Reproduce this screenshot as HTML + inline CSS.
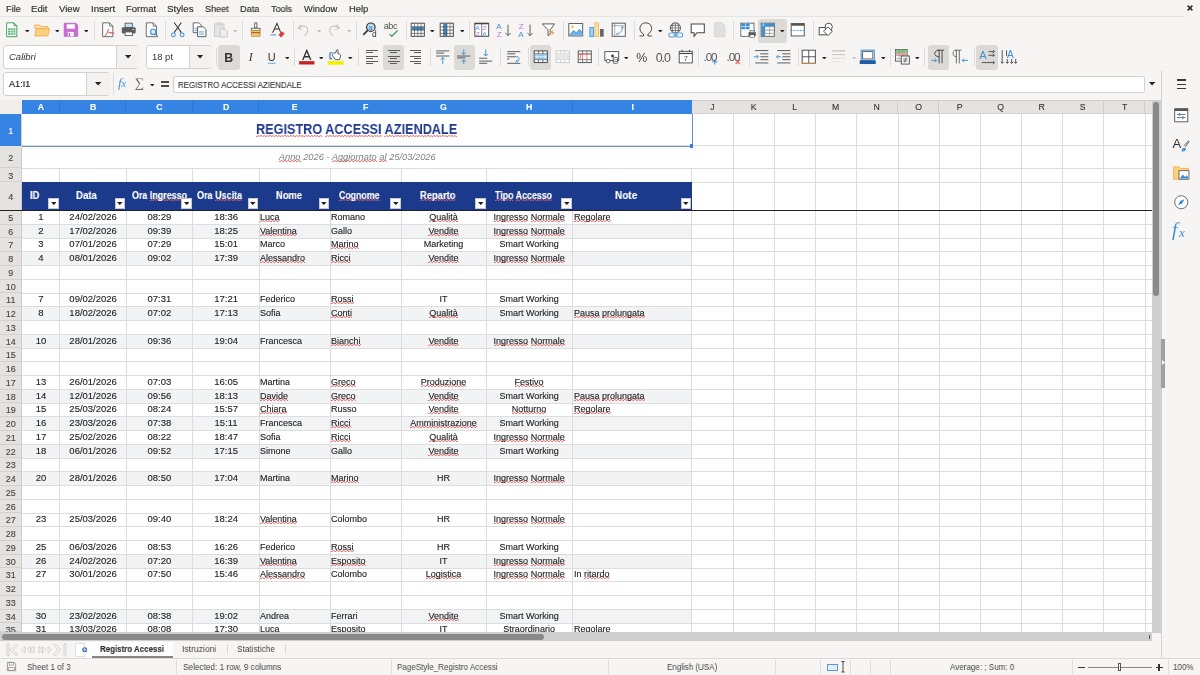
<!DOCTYPE html><html><head><meta charset="utf-8"><style>
html,body{margin:0;padding:0;}
body{width:1200px;height:675px;overflow:hidden;position:relative;background:#f6f5f4;font-family:"Liberation Sans",sans-serif;}
div{box-sizing:border-box;}
.wv{background-image:linear-gradient(135deg,transparent 38%,#e66262 38%,#e66262 62%,transparent 62%),linear-gradient(45deg,transparent 38%,#e66262 38%,#e66262 62%,transparent 62%);background-size:3.4px 2px;background-repeat:repeat-x;background-position:0 100%,1.7px 100%;}
.g{will-change:transform;}
.c{will-change:transform;position:absolute;height:13.75px;color:#222;white-space:nowrap;-webkit-text-stroke:0.12px #222;}
.n{font-size:9.5px;line-height:11.9px;}
.t{font-size:9px;line-height:13.2px;}
#root{position:absolute;left:0;top:0;width:1200px;height:675px;overflow:hidden;transform:translateZ(0);}
</style></head><body><div id="root">
<div class="g" style="position:absolute;left:5.50px;top:4.93px;font-size:9.30px;line-height:1;font-weight:normal;font-style:normal;color:#2e2e2e;white-space:nowrap;transform:scaleX(0.9882);transform-origin:0 0;-webkit-text-stroke:0.15px #2e2e2e;">File</div>
<div class="g" style="position:absolute;left:31.30px;top:4.93px;font-size:9.30px;line-height:1;font-weight:normal;font-style:normal;color:#2e2e2e;white-space:nowrap;transform:scaleX(1.0283);transform-origin:0 0;-webkit-text-stroke:0.15px #2e2e2e;">Edit</div>
<div class="g" style="position:absolute;left:58.60px;top:4.93px;font-size:9.30px;line-height:1;font-weight:normal;font-style:normal;color:#2e2e2e;white-space:nowrap;transform:scaleX(1.0300);transform-origin:0 0;-webkit-text-stroke:0.15px #2e2e2e;">View</div>
<div class="g" style="position:absolute;left:90.60px;top:4.93px;font-size:9.30px;line-height:1;font-weight:normal;font-style:normal;color:#2e2e2e;white-space:nowrap;transform:scaleX(1.0406);transform-origin:0 0;-webkit-text-stroke:0.15px #2e2e2e;">Insert</div>
<div class="g" style="position:absolute;left:125.90px;top:4.93px;font-size:9.30px;line-height:1;font-weight:normal;font-style:normal;color:#2e2e2e;white-space:nowrap;transform:scaleX(1.0224);transform-origin:0 0;-webkit-text-stroke:0.15px #2e2e2e;">Format</div>
<div class="g" style="position:absolute;left:166.70px;top:4.93px;font-size:9.30px;line-height:1;font-weight:normal;font-style:normal;color:#2e2e2e;white-space:nowrap;transform:scaleX(1.0494);transform-origin:0 0;-webkit-text-stroke:0.15px #2e2e2e;">Styles</div>
<div class="g" style="position:absolute;left:204.60px;top:4.93px;font-size:9.30px;line-height:1;font-weight:normal;font-style:normal;color:#2e2e2e;white-space:nowrap;transform:scaleX(0.9743);transform-origin:0 0;-webkit-text-stroke:0.15px #2e2e2e;">Sheet</div>
<div class="g" style="position:absolute;left:239.90px;top:4.93px;font-size:9.30px;line-height:1;font-weight:normal;font-style:normal;color:#2e2e2e;white-space:nowrap;transform:scaleX(0.9810);transform-origin:0 0;-webkit-text-stroke:0.15px #2e2e2e;">Data</div>
<div class="g" style="position:absolute;left:271.00px;top:4.93px;font-size:9.30px;line-height:1;font-weight:normal;font-style:normal;color:#2e2e2e;white-space:nowrap;transform:scaleX(0.9714);transform-origin:0 0;-webkit-text-stroke:0.15px #2e2e2e;">Tools</div>
<div class="g" style="position:absolute;left:303.70px;top:4.93px;font-size:9.30px;line-height:1;font-weight:normal;font-style:normal;color:#2e2e2e;white-space:nowrap;transform:scaleX(1.0025);transform-origin:0 0;-webkit-text-stroke:0.15px #2e2e2e;">Window</div>
<div class="g" style="position:absolute;left:348.80px;top:4.93px;font-size:9.30px;line-height:1;font-weight:normal;font-style:normal;color:#2e2e2e;white-space:nowrap;transform:scaleX(1.0096);transform-origin:0 0;-webkit-text-stroke:0.15px #2e2e2e;">Help</div>
<svg style="position:absolute;left:1186.5px;top:5px" width="6" height="6" viewBox="0 0 6 6"><path d="M0.6 0.6L5.4 5.4M5.4 0.6L0.6 5.4" stroke="#2a2a2a" stroke-width="1.5"/></svg>
<div style="position:absolute;left:0.00px;top:15.90px;width:1183.75px;height:0.80px;background:#e6e4e1;"></div>
<div style="position:absolute;left:758.20px;top:19.30px;width:28.50px;height:23.50px;background:#dcdad7;border-radius:3px;"></div>
<svg style="position:absolute;left:3.25px;top:21.25px" width="17.5" height="17.5" viewBox="0 0 24 24"><path d="M5 2.5h10l4 4v15H5z" fill="#fff" stroke="#3a9a5a" stroke-width="1.3"/><path d="M15 2.5v4h4" fill="none" stroke="#3a9a5a" stroke-width="1.3"/>
<rect x="7" y="10" width="10" height="9" fill="#5cb87a"/><path d="M7 13h10M7 16h10M10.5 10v9M13.8 10v9" stroke="#fff" stroke-width="0.8"/></svg>
<svg style="position:absolute;left:33.25px;top:21.25px" width="17.5" height="17.5" viewBox="0 0 24 24"><path d="M2.5 5.5h7l2 2h9v3H2.5z" fill="#fde4a6" stroke="#f0a853" stroke-width="1.2"/><path d="M2.5 20.5l2-10h18l-2 10z" fill="#fcd27c" stroke="#f0a853" stroke-width="1.2"/></svg>
<svg style="position:absolute;left:62.25px;top:21.25px" width="17.5" height="17.5" viewBox="0 0 24 24"><path d="M3 3h16l2.5 2.5V21H3z" fill="#c86fd6" stroke="#b35ac3" stroke-width="1"/><rect x="6.5" y="4.5" width="11" height="6" fill="#fff"/><rect x="8" y="15" width="8" height="6" fill="#fff"/><rect x="9.2" y="16.5" width="2" height="4.5" fill="#b35ac3"/></svg>
<svg style="position:absolute;left:98.75px;top:21.25px" width="17.5" height="17.5" viewBox="0 0 24 24"><path d="M5 2.5h9.5l4.5 4.5v14.5H5z" fill="#fff" stroke="#666" stroke-width="1.3"/><path d="M14.5 2.5V7H19" fill="none" stroke="#666" stroke-width="1.2"/><path d="M13 11c-1 5-3 8-5 10M13 15c2 1 5 2 8 1.5" fill="none" stroke="#e05555" stroke-width="1.4"/></svg>
<svg style="position:absolute;left:120.25px;top:21.25px" width="17.5" height="17.5" viewBox="0 0 24 24"><rect x="7" y="3" width="10" height="6" fill="#bfe3f7" stroke="#555" stroke-width="1.2"/><rect x="2.5" y="8.5" width="19" height="8.5" rx="1.5" fill="#5c5c5c"/><rect x="7" y="15" width="10" height="5" fill="#fff" stroke="#555" stroke-width="1.2"/><rect x="17" y="11" width="2" height="1.2" fill="#fff"/></svg>
<svg style="position:absolute;left:142.75px;top:21.25px" width="17.5" height="17.5" viewBox="0 0 24 24"><path d="M4.5 2.5h9.5l4.5 4.5v14.5h-14z" fill="#fff" stroke="#666" stroke-width="1.3"/><path d="M14 2.5V7h4.5" fill="none" stroke="#666" stroke-width="1.2"/><circle cx="14" cy="15" r="3.6" fill="#dff0fb" stroke="#3b8fd6" stroke-width="1.5"/><path d="M16.7 17.7l4 4" stroke="#3b8fd6" stroke-width="1.6"/></svg>
<svg style="position:absolute;left:169.25px;top:21.25px" width="17.5" height="17.5" viewBox="0 0 24 24"><path d="M7 2l10 14M17 2L7 16" stroke="#333" stroke-width="1.4" fill="none"/><circle cx="6" cy="19" r="2.6" fill="#fff" stroke="#3b8fd6" stroke-width="1.4"/><circle cx="18" cy="19" r="2.6" fill="#fff" stroke="#3b8fd6" stroke-width="1.4"/></svg>
<svg style="position:absolute;left:191.25px;top:21.25px" width="17.5" height="17.5" viewBox="0 0 24 24"><path d="M3 2.5h8l3 3V16H3z" fill="#fff" stroke="#555" stroke-width="1.2"/><path d="M9 8h8l3.5 3.5V21.5H9z" fill="#fff" stroke="#555" stroke-width="1.3"/><path d="M11 15h7M11 18h7M5 10h4M5 13h4" stroke="#3b8fd6" stroke-width="1.1"/></svg>
<svg style="position:absolute;left:212.25px;top:21.25px" width="17.5" height="17.5" viewBox="0 0 24 24"><rect x="3.5" y="4" width="13" height="17" fill="#e4e4e4" stroke="#c8c8c8" stroke-width="1.2"/><rect x="7" y="2.5" width="6" height="3" fill="#ddd" stroke="#c8c8c8"/><path d="M11 11h7l3 3v8H11z" fill="#eee" stroke="#c4c4c4" stroke-width="1.2"/></svg>
<svg style="position:absolute;left:247.25px;top:21.25px" width="17.5" height="17.5" viewBox="0 0 24 24"><path d="M10.5 2.5h3v7h-3z" fill="#fff" stroke="#555" stroke-width="1.2"/><path d="M6 10h12v3H6z" fill="#fff" stroke="#555" stroke-width="1.2"/><path d="M6 13h12v8H6z" fill="#f5c46e" stroke="#b8874a" stroke-width="1"/><path d="M6 16h12" stroke="#a0522d" stroke-width="1.4"/></svg>
<svg style="position:absolute;left:269.25px;top:21.25px" width="17.5" height="17.5" viewBox="0 0 24 24"><path d="M5 16L11 3l5 13M7.5 11h6.5" fill="none" stroke="#333" stroke-width="1.4"/><path d="M2 19h8" stroke="#3b8fd6" stroke-width="1.3"/><path d="M13 19l5-5 3.5 3.5-5 5z" fill="#e03a3a"/></svg>
<svg style="position:absolute;left:295.25px;top:21.25px" width="17.5" height="17.5" viewBox="0 0 24 24"><path d="M4 10l4.5-5M4 10l6 1.5M4.5 10c4-4.5 13-4 13 2.5 0 3-2 5.5-4.5 8" fill="none" stroke="#c4c4c4" stroke-width="1.4"/></svg>
<svg style="position:absolute;left:325.25px;top:21.25px" width="17.5" height="17.5" viewBox="0 0 24 24"><path d="M20 10l-4.5-5M20 10l-6 1.5M19.5 10c-4-4.5-13-4-13 2.5 0 3 2 5.5 4.5 8" fill="none" stroke="#c4c4c4" stroke-width="1.4"/></svg>
<svg style="position:absolute;left:361.25px;top:21.25px" width="17.5" height="17.5" viewBox="0 0 24 24"><circle cx="13.5" cy="8.5" r="5.8" fill="#bfdcf3" stroke="#333" stroke-width="1.6"/><path d="M9.5 12.5L3 19" stroke="#333" stroke-width="2.2"/><text x="10.3" y="11.8" font-size="10" fill="#2a7bc0" font-family="Liberation Sans">a</text><text x="15" y="22.5" font-size="11.5" fill="#333" font-family="Liberation Sans">d</text></svg>
<svg style="position:absolute;left:383.25px;top:21.25px" width="17.5" height="17.5" viewBox="0 0 24 24"><text x="1" y="11" font-size="12.5" fill="#555" font-family="Liberation Sans" letter-spacing="-0.6">abc</text><path d="M9 18l3 3 8-8" fill="none" stroke="#3aa060" stroke-width="1.7"/></svg>
<svg style="position:absolute;left:409.25px;top:21.25px" width="17.5" height="17.5" viewBox="0 0 24 24"><rect x="3" y="3" width="18" height="18" fill="#fff" stroke="#444" stroke-width="1.3"/><rect x="3.6" y="8" width="16.8" height="4.5" fill="#3b8fd6"/><path d="M3 8h18M3 12.5h18M3 17h18M7.5 3v18M12 3v18M16.5 3v18" stroke="#444" stroke-width="0.9"/></svg>
<svg style="position:absolute;left:438.25px;top:21.25px" width="17.5" height="17.5" viewBox="0 0 24 24"><rect x="3" y="3" width="18" height="18" fill="#fff" stroke="#444" stroke-width="1.3"/><rect x="8" y="3.6" width="4.5" height="16.8" fill="#3b8fd6"/><path d="M3 8h18M3 12.5h18M3 17h18M7.5 3v18M12 3v18M16.5 3v18" stroke="#444" stroke-width="0.9"/></svg>
<svg style="position:absolute;left:473.25px;top:21.25px" width="17.5" height="17.5" viewBox="0 0 24 24"><rect x="2.5" y="3" width="19" height="18" fill="#fff" stroke="#444" stroke-width="1.3"/><path d="M2.5 3.6h19" stroke="#444" stroke-width="1.8"/><path d="M12 3v18" stroke="#444" stroke-width="1"/><text x="3.5" y="12" font-size="8.5" fill="#3b8fd6" font-family="Liberation Sans">A</text><text x="4" y="20" font-size="8.5" fill="#c86fd6" font-family="Liberation Sans">Z</text><text x="13.5" y="12" font-size="8.5" fill="#c86fd6" font-family="Liberation Sans">Z</text><text x="13" y="20" font-size="8.5" fill="#3b8fd6" font-family="Liberation Sans">A</text></svg>
<svg style="position:absolute;left:496.25px;top:21.25px" width="17.5" height="17.5" viewBox="0 0 24 24"><text x="0.5" y="11" font-size="11" fill="#3b8fd6" font-family="Liberation Sans">A</text><text x="1" y="22" font-size="11" fill="#c86fd6" font-family="Liberation Sans">Z</text><path d="M16.5 5v15M13 16.5L16.5 20l3.5-3.5" fill="none" stroke="#555" stroke-width="1.3"/></svg>
<svg style="position:absolute;left:518.25px;top:21.25px" width="17.5" height="17.5" viewBox="0 0 24 24"><text x="1" y="11" font-size="11" fill="#c86fd6" font-family="Liberation Sans">Z</text><text x="0.5" y="22" font-size="11" fill="#3b8fd6" font-family="Liberation Sans">A</text><path d="M16.5 5v15M13 16.5L16.5 20l3.5-3.5" fill="none" stroke="#555" stroke-width="1.3"/></svg>
<svg style="position:absolute;left:539.75px;top:21.25px" width="17.5" height="17.5" viewBox="0 0 24 24"><path d="M3 4h17l-6 8v6l-3 2v-8z" fill="#fff" stroke="#555" stroke-width="1.3"/><path d="M18 11l-4 5h3l-2 5 5-6h-3z" fill="#f0a030"/></svg>
<svg style="position:absolute;left:567.25px;top:21.25px" width="17.5" height="17.5" viewBox="0 0 24 24"><rect x="2.5" y="3.5" width="19" height="17" fill="#fff" stroke="#555" stroke-width="1.3"/><circle cx="7.5" cy="8" r="1.8" fill="#f2c04a"/><path d="M3 20l6-7 4 3.5 4-5 4.5 5V20z" fill="#6cb4ea"/><path d="M3 20l6-7 4 3.5 4-5 4.5 5" fill="none" stroke="#2a7bc0" stroke-width="1"/></svg>
<svg style="position:absolute;left:588.25px;top:21.25px" width="17.5" height="17.5" viewBox="0 0 24 24"><rect x="2.5" y="9" width="5" height="12.5" fill="#9fd0f5" stroke="#3b8fd6" stroke-width="1.1"/><rect x="9.5" y="2.5" width="5" height="19" fill="#fde2a8" stroke="#f0b050" stroke-width="1.1"/><rect x="16.5" y="11" width="5" height="10.5" fill="#666"/></svg>
<svg style="position:absolute;left:610.25px;top:21.25px" width="17.5" height="17.5" viewBox="0 0 24 24"><rect x="3" y="3" width="18" height="18" fill="#fff" stroke="#555" stroke-width="1.3"/><path d="M3 6.5h18M6.5 3v18" stroke="#888" stroke-width="1"/><path d="M9 18c4 0 8-4 8-9" fill="none" stroke="#3b8fd6" stroke-width="1.3"/><path d="M15 10l2-2.5 2 2.5M11 16l-2 2 2 2" fill="none" stroke="#3b8fd6" stroke-width="1.2"/></svg>
<svg style="position:absolute;left:637.25px;top:21.25px" width="17.5" height="17.5" viewBox="0 0 24 24"><path d="M3.5 20.5h5.5v-2.5c-3-1.5-5-4.5-5-8 0-4.5 3.5-7.5 8-7.5s8 3 8 7.5c0 3.5-2 6.5-5 8v2.5h5.5" fill="none" stroke="#444" stroke-width="1.3"/></svg>
<svg style="position:absolute;left:667.25px;top:21.25px" width="17.5" height="17.5" viewBox="0 0 24 24"><circle cx="11.5" cy="9.5" r="7" fill="#fff" stroke="#444" stroke-width="1.2"/><path d="M4.5 9.5h14M11.5 2.5v14M5.5 6h12M5.5 13h12M8.5 3c-2 4-2 9 0 13M14.5 3c2 4 2 9 0 13" fill="none" stroke="#444" stroke-width="0.9"/><rect x="2.5" y="16.5" width="9.5" height="5.5" rx="2.7" fill="#fff" stroke="#5aa0dc" stroke-width="1.5"/><rect x="12" y="16.5" width="9.5" height="5.5" rx="2.7" fill="#fff" stroke="#5aa0dc" stroke-width="1.5"/><path d="M8 19.2h8" stroke="#5aa0dc" stroke-width="1.5"/></svg>
<svg style="position:absolute;left:689.25px;top:21.25px" width="17.5" height="17.5" viewBox="0 0 24 24"><path d="M3 4h18v12h-10l-4 5v-5H3z" fill="#fff" stroke="#444" stroke-width="1.4"/></svg>
<svg style="position:absolute;left:711.25px;top:21.25px" width="17.5" height="17.5" viewBox="0 0 24 24"><path d="M5 2.5h10l4 4v15H5z" fill="#e0e0e0" stroke="#d0d0d0" stroke-width="1.2"/></svg>
<svg style="position:absolute;left:738.75px;top:21.25px" width="17.5" height="17.5" viewBox="0 0 24 24"><rect x="2.5" y="3" width="18" height="18" fill="#fff" stroke="#555" stroke-width="1.2"/><rect x="3" y="3.5" width="12" height="8" fill="#3b8fd6"/><path d="M2.5 7.5h18M2.5 12h18M2.5 16.5h12M9 3v18M15 3v9" stroke="#fff" stroke-width="0.8"/><path d="M2.5 7.5h12M2.5 12h12" stroke="#bfe0f7" stroke-width="0.8"/><rect x="13" y="15" width="10" height="6" rx="1" fill="#555"/><rect x="15" y="13" width="6" height="3" fill="#bfe3f7" stroke="#555" stroke-width="0.8"/><rect x="15" y="19" width="6" height="3.5" fill="#fff" stroke="#555" stroke-width="0.8"/></svg>
<svg style="position:absolute;left:758.75px;top:21.25px" width="17.5" height="17.5" viewBox="0 0 24 24"><rect x="3" y="3" width="18" height="18" fill="#fff" stroke="#555" stroke-width="1.2"/><rect x="3.5" y="3.5" width="17" height="4.5" fill="#3b8fd6"/><rect x="3.5" y="3.5" width="5" height="17" fill="#3b8fd6"/><path d="M3 12.5h18M3 17h18M14.5 3v18" stroke="#888" stroke-width="0.9"/><path d="M9 8h12M9 12.5h12M9 17h12" stroke="#aaa" stroke-width="0.8"/><path d="M6 2v5M4 5l2 2 2-2" stroke="#bfe3f7" fill="none" stroke-width="1"/></svg>
<svg style="position:absolute;left:789.25px;top:21.25px" width="17.5" height="17.5" viewBox="0 0 24 24"><rect x="3" y="3.5" width="18" height="17" fill="#fff" stroke="#555" stroke-width="1.3"/><rect x="3" y="3.5" width="18" height="3" fill="#555"/><path d="M2 13h20" stroke="#3b8fd6" stroke-dasharray="2.5 1.8" stroke-width="1.3"/></svg>
<svg style="position:absolute;left:817.25px;top:21.25px" width="17.5" height="17.5" viewBox="0 0 24 24"><rect x="3" y="9" width="10" height="10" fill="#fff" stroke="#444" stroke-width="1.3"/><circle cx="16" cy="8" r="5" fill="#fff" stroke="#444" stroke-width="1.3"/><path d="M15 8l6 6-6 6-6-6z" fill="#fff" stroke="#444" stroke-width="1.3"/></svg>
<svg style="position:absolute;left:25.20px;top:29.63px" width="4.6" height="2.53" viewBox="0 0 10 5.5"><path d="M0 0h10L5 5.5z" fill="#222"/></svg>
<svg style="position:absolute;left:54.70px;top:29.63px" width="4.6" height="2.53" viewBox="0 0 10 5.5"><path d="M0 0h10L5 5.5z" fill="#222"/></svg>
<svg style="position:absolute;left:83.70px;top:29.63px" width="4.6" height="2.53" viewBox="0 0 10 5.5"><path d="M0 0h10L5 5.5z" fill="#222"/></svg>
<svg style="position:absolute;left:430.20px;top:29.63px" width="4.6" height="2.53" viewBox="0 0 10 5.5"><path d="M0 0h10L5 5.5z" fill="#222"/></svg>
<svg style="position:absolute;left:459.70px;top:29.63px" width="4.6" height="2.53" viewBox="0 0 10 5.5"><path d="M0 0h10L5 5.5z" fill="#222"/></svg>
<svg style="position:absolute;left:658.20px;top:29.63px" width="4.6" height="2.53" viewBox="0 0 10 5.5"><path d="M0 0h10L5 5.5z" fill="#222"/></svg>
<svg style="position:absolute;left:780.20px;top:29.63px" width="4.6" height="2.53" viewBox="0 0 10 5.5"><path d="M0 0h10L5 5.5z" fill="#222"/></svg>
<svg style="position:absolute;left:232.70px;top:29.63px" width="4.6" height="2.53" viewBox="0 0 10 5.5"><path d="M0 0h10L5 5.5z" fill="#bdbdbd"/></svg>
<svg style="position:absolute;left:317.20px;top:29.63px" width="4.6" height="2.53" viewBox="0 0 10 5.5"><path d="M0 0h10L5 5.5z" fill="#bdbdbd"/></svg>
<svg style="position:absolute;left:346.70px;top:29.63px" width="4.6" height="2.53" viewBox="0 0 10 5.5"><path d="M0 0h10L5 5.5z" fill="#bdbdbd"/></svg>
<div style="position:absolute;left:94.00px;top:21.00px;width:0.80px;height:19.00px;background:#dedcda;"></div>
<div style="position:absolute;left:164.50px;top:21.00px;width:0.80px;height:19.00px;background:#dedcda;"></div>
<div style="position:absolute;left:242.00px;top:21.00px;width:0.80px;height:19.00px;background:#dedcda;"></div>
<div style="position:absolute;left:292.50px;top:21.00px;width:0.80px;height:19.00px;background:#dedcda;"></div>
<div style="position:absolute;left:356.00px;top:21.00px;width:0.80px;height:19.00px;background:#dedcda;"></div>
<div style="position:absolute;left:405.50px;top:21.00px;width:0.80px;height:19.00px;background:#dedcda;"></div>
<div style="position:absolute;left:469.00px;top:21.00px;width:0.80px;height:19.00px;background:#dedcda;"></div>
<div style="position:absolute;left:562.50px;top:21.00px;width:0.80px;height:19.00px;background:#dedcda;"></div>
<div style="position:absolute;left:634.00px;top:21.00px;width:0.80px;height:19.00px;background:#dedcda;"></div>
<div style="position:absolute;left:733.00px;top:21.00px;width:0.80px;height:19.00px;background:#dedcda;"></div>
<div style="position:absolute;left:812.50px;top:21.00px;width:0.80px;height:19.00px;background:#dedcda;"></div>
<div style="position:absolute;left:3.30px;top:45.25px;width:136.20px;height:23.25px;background:#fff;border:0.8px solid #d5d1cc;border-radius:3px;"></div>
<div style="position:absolute;left:116.25px;top:45.65px;width:22.85px;height:22.45px;background:#f3f2f1;border-left:0.8px solid #d5d1cc;border-radius:0 3px 3px 0;"></div>
<svg style="position:absolute;left:125.10px;top:55.30px" width="6.2" height="3.41" viewBox="0 0 10 5.5"><path d="M0 0h10L5 5.5z" fill="#222"/></svg>
<div class="g" style="position:absolute;left:9.30px;top:53.22px;font-size:8.72px;line-height:1;font-weight:normal;font-style:italic;color:#333;white-space:nowrap;transform:scaleX(1.0884);transform-origin:0 0;">Calibri</div>
<div style="position:absolute;left:146.20px;top:45.25px;width:66.00px;height:23.25px;background:#fff;border:0.8px solid #d5d1cc;border-radius:3px;"></div>
<div style="position:absolute;left:189.00px;top:45.65px;width:22.80px;height:22.45px;background:#f3f2f1;border-left:0.8px solid #d5d1cc;border-radius:0 3px 3px 0;"></div>
<svg style="position:absolute;left:197.40px;top:55.30px" width="6.2" height="3.41" viewBox="0 0 10 5.5"><path d="M0 0h10L5 5.5z" fill="#222"/></svg>
<div class="g" style="position:absolute;left:152.20px;top:53.34px;font-size:8.58px;line-height:1;font-weight:normal;font-style:normal;color:#333;white-space:nowrap;transform:scaleX(1.1006);transform-origin:0 0;">18 pt</div>
<div style="position:absolute;left:218.20px;top:44.90px;width:21.60px;height:24.90px;background:#dcdad7;border-radius:3px;"></div>
<div style="position:absolute;left:382.50px;top:44.90px;width:21.50px;height:24.90px;background:#dcdad7;border-radius:3px;"></div>
<div style="position:absolute;left:454.00px;top:44.90px;width:21.00px;height:24.90px;background:#dcdad7;border-radius:3px;"></div>
<div style="position:absolute;left:530.00px;top:44.90px;width:21.00px;height:24.90px;background:#dcdad7;border-radius:3px;"></div>
<div style="position:absolute;left:927.50px;top:44.90px;width:21.50px;height:24.90px;background:#dcdad7;border-radius:3px;"></div>
<div style="position:absolute;left:976.00px;top:44.90px;width:21.50px;height:24.90px;background:#dcdad7;border-radius:3px;"></div>
<svg style="position:absolute;left:220.25px;top:48.25px" width="17.5" height="17.5" viewBox="0 0 24 24"><text x="12" y="19" text-anchor="middle" font-size="17" font-weight="bold" fill="#333" font-family="Liberation Sans">B</text></svg>
<svg style="position:absolute;left:242.25px;top:48.25px" width="17.5" height="17.5" viewBox="0 0 24 24"><text x="12" y="18.5" text-anchor="middle" font-size="16" font-style="italic" fill="#333" font-family="Liberation Serif">I</text></svg>
<svg style="position:absolute;left:263.25px;top:48.25px" width="17.5" height="17.5" viewBox="0 0 24 24"><text x="12" y="17.5" text-anchor="middle" font-size="15" fill="#333" font-family="Liberation Sans">U</text><path d="M6.5 21h11" stroke="#6aa8de" stroke-width="1.3"/></svg>
<svg style="position:absolute;left:298.25px;top:48.25px" width="17.5" height="17.5" viewBox="0 0 24 24"><path d="M6.5 16.5L12 3.5l5.5 13M8.5 12h7" fill="none" stroke="#333" stroke-width="1.9"/><rect x="1.5" y="18" width="21" height="4.6" fill="#c9211e"/></svg>
<svg style="position:absolute;left:327.25px;top:48.25px" width="17.5" height="17.5" viewBox="0 0 24 24"><rect x="1" y="18" width="22" height="5" fill="#f4f000"/><path d="M4 6.5h3.5M4 6.5v8h3" fill="none" stroke="#2a7bc0" stroke-width="1.6"/><path d="M8.5 7.5c1-1 2.5-1.5 3.5-.5l1-4c.3-1 2-1 2 .3v4.5l2 .5c1.5.5 2 2 1.5 3.5l-1.5 4.2h-5.5l-3.8-5c-.8-1-.3-2.5.8-3.5z" fill="#fff" stroke="#444" stroke-width="1.2"/></svg>
<svg style="position:absolute;left:433.75px;top:48.25px" width="17.5" height="17.5" viewBox="0 0 24 24"><path d="M3 4h18" stroke="#555" stroke-width="1.3"/><path d="M3 7h11" stroke="#555" stroke-width="1.3"/><path d="M3 11h18" stroke="#555" stroke-width="1.3"/><path d="M12 22v-9M9 16l3-3 3 3" fill="none" stroke="#3b8fd6" stroke-width="1.3"/></svg>
<svg style="position:absolute;left:455.25px;top:48.25px" width="17.5" height="17.5" viewBox="0 0 24 24"><path d="M3 11h18" stroke="#555" stroke-width="1.3"/><path d="M3 13.5h11" stroke="#555" stroke-width="1.3"/><path d="M12 2v7M9 6l3 3 3-3M12 22v-6M9 19l3-3 3 3" fill="none" stroke="#3b8fd6" stroke-width="1.3"/></svg>
<svg style="position:absolute;left:477.25px;top:48.25px" width="17.5" height="17.5" viewBox="0 0 24 24"><path d="M3 14h11" stroke="#555" stroke-width="1.3"/><path d="M3 18h18" stroke="#555" stroke-width="1.3"/><path d="M3 21h11" stroke="#555" stroke-width="1.3"/><path d="M12 2v9M9 8l3 3 3-3" fill="none" stroke="#3b8fd6" stroke-width="1.3"/></svg>
<svg style="position:absolute;left:505.25px;top:48.25px" width="17.5" height="17.5" viewBox="0 0 24 24"><path d="M3 5h18" stroke="#555" stroke-width="1.3"/><path d="M3 8h11" stroke="#555" stroke-width="1.3"/><path d="M3 12h12" stroke="#555" stroke-width="1.3"/><path d="M3 15h3" stroke="#555" stroke-width="1.3"/><path d="M3 21h18" stroke="#555" stroke-width="1.3"/><path d="M15 12h2c3 0 3 6 0 6h-2M17 16l-2 2 2 2" fill="none" stroke="#3b8fd6" stroke-width="1.3"/></svg>
<svg style="position:absolute;left:532.25px;top:48.25px" width="17.5" height="17.5" viewBox="0 0 24 24"><rect x="3" y="4" width="18" height="16" fill="#fff" stroke="#444" stroke-width="1.3"/><path d="M3 8h18M3 16h18M9 4v4M15 4v4M9 16v4M15 16v4" stroke="#444" stroke-width="1"/><rect x="3.6" y="8.6" width="16.8" height="6.8" fill="#8cc4ee"/><path d="M5 12h14M7 10l-2 2 2 2M17 10l2 2-2 2" fill="none" stroke="#fff" stroke-width="1.1"/></svg>
<svg style="position:absolute;left:554.25px;top:48.25px" width="17.5" height="17.5" viewBox="0 0 24 24"><rect x="3" y="4" width="18" height="16" fill="#fff" stroke="#c8c8c8" stroke-width="1.3"/><path d="M3 8h18M3 16h18M9 4v4M15 4v4M9 16v4M15 16v4" stroke="#c8c8c8" stroke-width="1"/><rect x="3.6" y="8.6" width="16.8" height="6.8" fill="#e6e6e6"/></svg>
<svg style="position:absolute;left:576.25px;top:48.25px" width="17.5" height="17.5" viewBox="0 0 24 24"><rect x="3" y="4" width="18" height="16" fill="#fff" stroke="#555" stroke-width="1.3"/><path d="M3 8h18M3 16h18M9 4v4M15 4v4M9 16v4M15 16v4" stroke="#555" stroke-width="1"/><path d="M3 8.5h18M9 8v8M15 8v8M6 8v8" stroke="#e05555" stroke-width="1"/></svg>
<svg style="position:absolute;left:602.75px;top:48.25px" width="17.5" height="17.5" viewBox="0 0 24 24"><rect x="2.5" y="5" width="19" height="12" fill="#fff" stroke="#444" stroke-width="1.2"/><circle cx="13" cy="11" r="2" fill="#444"/><circle cx="7" cy="18" r="2.5" fill="#fff" stroke="#444" stroke-width="1.1"/><rect x="14" y="13" width="6" height="8" rx="1" fill="#fff" stroke="#444" stroke-width="1.1"/><path d="M14 16h6M14 18.5h6" stroke="#444" stroke-width="0.8"/></svg>
<svg style="position:absolute;left:633.25px;top:48.25px" width="17.5" height="17.5" viewBox="0 0 24 24"><text x="12" y="19" text-anchor="middle" font-size="17" fill="#444" font-family="Liberation Sans">%</text></svg>
<svg style="position:absolute;left:654.25px;top:48.25px" width="17.5" height="17.5" viewBox="0 0 24 24"><text x="12" y="19.5" text-anchor="middle" font-size="17" fill="#555" font-family="Liberation Sans" letter-spacing="-1.5">0.0</text></svg>
<svg style="position:absolute;left:677.25px;top:48.25px" width="17.5" height="17.5" viewBox="0 0 24 24"><rect x="3" y="4.5" width="18" height="16" fill="#fff" stroke="#444" stroke-width="1.2"/><path d="M3 7.5h18" stroke="#444" stroke-width="1.6"/><path d="M7 2.5v3M17 2.5v3" stroke="#444" stroke-width="1.2"/><text x="12" y="18.5" text-anchor="middle" font-size="10" fill="#444" font-family="Liberation Sans">7</text></svg>
<svg style="position:absolute;left:702.25px;top:48.25px" width="17.5" height="17.5" viewBox="0 0 24 24"><text x="11" y="18.5" text-anchor="middle" font-size="16" fill="#555" font-family="Liberation Sans" letter-spacing="-1.5">.00</text><path d="M17.5 15.5v7M14 19h7" stroke="#3b8fd6" stroke-width="1.4"/></svg>
<svg style="position:absolute;left:725.25px;top:48.25px" width="17.5" height="17.5" viewBox="0 0 24 24"><text x="11" y="18.5" text-anchor="middle" font-size="16" fill="#555" font-family="Liberation Sans" letter-spacing="-1.5">.00</text><path d="M14.5 16l6 6M20.5 16l-6 6" stroke="#e05555" stroke-width="1.4"/></svg>
<svg style="position:absolute;left:753.25px;top:48.25px" width="17.5" height="17.5" viewBox="0 0 24 24"><path d="M3 3.5h18" stroke="#555" stroke-width="1.3"/><path d="M10 8h11" stroke="#555" stroke-width="1.3"/><path d="M10 12h11" stroke="#555" stroke-width="1.3"/><path d="M10 16h11" stroke="#555" stroke-width="1.3"/><path d="M3 20.5h18" stroke="#555" stroke-width="1.3"/><path d="M1 12h6M5 9.5l2.5 2.5L5 14.5" fill="none" stroke="#3b8fd6" stroke-width="1.3"/></svg>
<svg style="position:absolute;left:774.75px;top:48.25px" width="17.5" height="17.5" viewBox="0 0 24 24"><path d="M3 3.5h18" stroke="#555" stroke-width="1.3"/><path d="M10 8h11" stroke="#555" stroke-width="1.3"/><path d="M10 12h11" stroke="#555" stroke-width="1.3"/><path d="M10 16h11" stroke="#555" stroke-width="1.3"/><path d="M3 20.5h18" stroke="#555" stroke-width="1.3"/><path d="M2 12h6M4.5 9.5L2 12l2.5 2.5" fill="none" stroke="#3b8fd6" stroke-width="1.3"/></svg>
<svg style="position:absolute;left:800.25px;top:48.25px" width="17.5" height="17.5" viewBox="0 0 24 24"><rect x="3" y="3" width="18" height="18" fill="#fff" stroke="#444" stroke-width="1.3"/><path d="M3 12h18M12 3v18" stroke="#444" stroke-width="1.2"/><path d="M3 21h18" stroke="#f0a030" stroke-width="1"/></svg>
<svg style="position:absolute;left:830.25px;top:48.25px" width="17.5" height="17.5" viewBox="0 0 24 24"><path d="M3 4h18" stroke="#c8c8c8" stroke-width="2"/><path d="M3 9h18" stroke="#c8c8c8" stroke-width="1.6"/><path d="M3 14h18" stroke="#c8c8c8" stroke-width="1" stroke-dasharray="3 1"/><path d="M3 19h18" stroke="#c8c8c8" stroke-width="1" stroke-dasharray="1.5 1.5"/></svg>
<svg style="position:absolute;left:859.25px;top:48.25px" width="17.5" height="17.5" viewBox="0 0 24 24"><rect x="3" y="3" width="18" height="14" fill="#fff" stroke="#3b8fd6" stroke-width="1.4"/><rect x="5" y="5" width="14" height="10" fill="#fff" stroke="#444" stroke-width="1.1"/><rect x="1" y="17" width="22" height="5" fill="#1f5ca6"/></svg>
<svg style="position:absolute;left:893.75px;top:48.25px" width="17.5" height="17.5" viewBox="0 0 24 24"><rect x="2" y="2" width="16" height="16" fill="#fff" stroke="#555" stroke-width="1.2"/><rect x="2.5" y="2.5" width="15" height="4" fill="#7ecb7e"/><rect x="2.5" y="6.5" width="15" height="4" fill="#f4a6a6"/><path d="M2 6.5h16M2 10.5h16M2 14.5h16M7 2v16M12 2v16" stroke="#888" stroke-width="0.7"/><rect x="10" y="11" width="11" height="11" fill="#fff" stroke="#444" stroke-width="1.2"/><path d="M12.5 15h6M12.5 18h6M17 13l-3 7" stroke="#444" stroke-width="1"/></svg>
<svg style="position:absolute;left:930.25px;top:48.25px" width="17.5" height="17.5" viewBox="0 0 24 24"><path d="M10.5 3h9M12.5 3v18M16.5 3v18M12.5 3c-4 0-6 2-6 4.5s2 4.5 6 4.5" fill="none" stroke="#444" stroke-width="1.3"/><path d="M2 17h7M6.5 14.5L9 17l-2.5 2.5" fill="none" stroke="#3b8fd6" stroke-width="1.3"/></svg>
<svg style="position:absolute;left:952.25px;top:48.25px" width="17.5" height="17.5" viewBox="0 0 24 24"><path d="M4 3h9M6 3v18M10 3v18M6 3c-4 0-4.5 2-4.5 4.5S3 12 6 12" fill="none" stroke="#666" stroke-width="1.3"/><path d="M14 17h8M16.5 14.5L14 17l2.5 2.5" fill="none" stroke="#3b8fd6" stroke-width="1.3"/></svg>
<svg style="position:absolute;left:978.75px;top:48.25px" width="17.5" height="17.5" viewBox="0 0 24 24"><text x="0.5" y="15" font-size="15" fill="#3b8fd6" font-family="Liberation Sans">A</text><path d="M13 5h8M19 3l2 2-2 2M13 10h8M19 8l2 2-2 2M4 20h17M19 18l2 2-2 2" fill="none" stroke="#444" stroke-width="1.2"/></svg>
<svg style="position:absolute;left:999.75px;top:48.25px" width="17.5" height="17.5" viewBox="0 0 24 24"><text x="9.5" y="14" font-size="14" fill="#3b8fd6" font-family="Liberation Sans">A</text><path d="M3 3v18M1 19l2 2 2-2M10 15v6M8 19l2 2 2-2M16 15v6M14 19l2 2 2-2M21.5 15v6M19.5 19l2 2 2-2M9 3v8" fill="none" stroke="#444" stroke-width="1.2"/></svg>
<div style="position:absolute;left:365.50px;top:49.95px;width:12.00px;height:1.10px;background:#5c5c5c;"></div>
<div style="position:absolute;left:387.70px;top:49.95px;width:12.00px;height:1.10px;background:#5c5c5c;"></div>
<div style="position:absolute;left:409.60px;top:49.95px;width:11.90px;height:1.10px;background:#5c5c5c;"></div>
<div style="position:absolute;left:365.50px;top:55.55px;width:12.00px;height:1.10px;background:#5c5c5c;"></div>
<div style="position:absolute;left:387.70px;top:55.55px;width:12.00px;height:1.10px;background:#5c5c5c;"></div>
<div style="position:absolute;left:409.60px;top:55.55px;width:11.90px;height:1.10px;background:#5c5c5c;"></div>
<div style="position:absolute;left:365.50px;top:60.90px;width:12.00px;height:1.10px;background:#5c5c5c;"></div>
<div style="position:absolute;left:387.70px;top:60.90px;width:12.00px;height:1.10px;background:#5c5c5c;"></div>
<div style="position:absolute;left:409.60px;top:60.90px;width:11.90px;height:1.10px;background:#5c5c5c;"></div>
<div style="position:absolute;left:365.50px;top:51.95px;width:7.30px;height:1.10px;background:#5c5c5c;"></div>
<div style="position:absolute;left:390.30px;top:51.95px;width:6.60px;height:1.10px;background:#5c5c5c;"></div>
<div style="position:absolute;left:414.30px;top:51.95px;width:7.20px;height:1.10px;background:#5c5c5c;"></div>
<div style="position:absolute;left:365.50px;top:57.85px;width:7.30px;height:1.10px;background:#5c5c5c;"></div>
<div style="position:absolute;left:390.30px;top:57.85px;width:6.60px;height:1.10px;background:#5c5c5c;"></div>
<div style="position:absolute;left:414.30px;top:57.85px;width:7.20px;height:1.10px;background:#5c5c5c;"></div>
<div style="position:absolute;left:365.50px;top:63.00px;width:7.30px;height:1.10px;background:#5c5c5c;"></div>
<div style="position:absolute;left:390.30px;top:63.00px;width:6.60px;height:1.10px;background:#5c5c5c;"></div>
<div style="position:absolute;left:414.30px;top:63.00px;width:7.20px;height:1.10px;background:#5c5c5c;"></div>
<svg style="position:absolute;left:284.70px;top:56.73px" width="4.6" height="2.53" viewBox="0 0 10 5.5"><path d="M0 0h10L5 5.5z" fill="#222"/></svg>
<svg style="position:absolute;left:318.70px;top:56.73px" width="4.6" height="2.53" viewBox="0 0 10 5.5"><path d="M0 0h10L5 5.5z" fill="#222"/></svg>
<svg style="position:absolute;left:348.20px;top:56.73px" width="4.6" height="2.53" viewBox="0 0 10 5.5"><path d="M0 0h10L5 5.5z" fill="#222"/></svg>
<svg style="position:absolute;left:623.70px;top:56.73px" width="4.6" height="2.53" viewBox="0 0 10 5.5"><path d="M0 0h10L5 5.5z" fill="#222"/></svg>
<svg style="position:absolute;left:822.20px;top:56.73px" width="4.6" height="2.53" viewBox="0 0 10 5.5"><path d="M0 0h10L5 5.5z" fill="#222"/></svg>
<svg style="position:absolute;left:880.70px;top:56.73px" width="4.6" height="2.53" viewBox="0 0 10 5.5"><path d="M0 0h10L5 5.5z" fill="#222"/></svg>
<svg style="position:absolute;left:915.20px;top:56.73px" width="4.6" height="2.53" viewBox="0 0 10 5.5"><path d="M0 0h10L5 5.5z" fill="#222"/></svg>
<svg style="position:absolute;left:851.70px;top:56.73px" width="4.6" height="2.53" viewBox="0 0 10 5.5"><path d="M0 0h10L5 5.5z" fill="#c4c4c4"/></svg>
<div style="position:absolute;left:216.00px;top:48.00px;width:0.80px;height:18.00px;background:#dedcda;"></div>
<div style="position:absolute;left:294.00px;top:48.00px;width:0.80px;height:18.00px;background:#dedcda;"></div>
<div style="position:absolute;left:357.50px;top:48.00px;width:0.80px;height:18.00px;background:#dedcda;"></div>
<div style="position:absolute;left:430.00px;top:48.00px;width:0.80px;height:18.00px;background:#dedcda;"></div>
<div style="position:absolute;left:500.00px;top:48.00px;width:0.80px;height:18.00px;background:#dedcda;"></div>
<div style="position:absolute;left:527.50px;top:48.00px;width:0.80px;height:18.00px;background:#dedcda;"></div>
<div style="position:absolute;left:598.00px;top:48.00px;width:0.80px;height:18.00px;background:#dedcda;"></div>
<div style="position:absolute;left:697.50px;top:48.00px;width:0.80px;height:18.00px;background:#dedcda;"></div>
<div style="position:absolute;left:749.00px;top:48.00px;width:0.80px;height:18.00px;background:#dedcda;"></div>
<div style="position:absolute;left:797.50px;top:48.00px;width:0.80px;height:18.00px;background:#dedcda;"></div>
<div style="position:absolute;left:890.00px;top:48.00px;width:0.80px;height:18.00px;background:#dedcda;"></div>
<div style="position:absolute;left:924.00px;top:48.00px;width:0.80px;height:18.00px;background:#dedcda;"></div>
<div style="position:absolute;left:974.00px;top:48.00px;width:0.80px;height:18.00px;background:#dedcda;"></div>
<div style="position:absolute;left:3.30px;top:72.25px;width:107.20px;height:23.25px;background:#fff;border:0.8px solid #d5d1cc;border-radius:3px;"></div>
<div style="position:absolute;left:86.25px;top:72.65px;width:23.85px;height:22.45px;background:#f3f2f1;border-left:0.8px solid #d5d1cc;border-radius:0 3px 3px 0;"></div>
<svg style="position:absolute;left:95.10px;top:82.30px" width="6.2" height="3.41" viewBox="0 0 10 5.5"><path d="M0 0h10L5 5.5z" fill="#222"/></svg>
<div class="g" style="position:absolute;left:8.70px;top:80.22px;font-size:8.72px;line-height:1;font-weight:normal;font-style:normal;color:#222;white-space:nowrap;transform:scaleX(1.0460);transform-origin:0 0;-webkit-text-stroke:0.15px #222;">A1:I1</div>
<div style="position:absolute;left:112.80px;top:73.00px;width:0.80px;height:22.00px;background:#dedcda;"></div>
<div class="g" style="position:absolute;left:118.3px;top:76.3px;font-family:'Liberation Serif',serif;font-style:italic;color:#4694d6;font-size:13.5px;line-height:1;">f<span style="font-size:11px;margin-left:-0.6px;">x</span></div>
<div class="g" style="position:absolute;left:135px;top:75.6px;font-family:'Liberation Serif',serif;color:#666;font-size:13px;line-height:1;">&#x2211;</div>
<svg style="position:absolute;left:149.90px;top:83.53px" width="4.6" height="2.53" viewBox="0 0 10 5.5"><path d="M0 0h10L5 5.5z" fill="#222"/></svg>
<div style="position:absolute;left:161.00px;top:81.10px;width:7.80px;height:1.90px;background:#4a4a4a;"></div>
<div style="position:absolute;left:161.00px;top:85.10px;width:7.80px;height:1.90px;background:#4a4a4a;"></div>
<div style="position:absolute;left:173.20px;top:76.00px;width:972.30px;height:16.50px;background:#fff;border:0.8px solid #d5d1cc;border-radius:2px;"></div>
<div class="g" style="position:absolute;left:177.50px;top:80.67px;font-size:9.01px;line-height:1;font-weight:normal;font-style:normal;color:#333;white-space:nowrap;transform:scaleX(0.8798);transform-origin:0 0;-webkit-text-stroke:0.12px #333;">REGISTRO ACCESSI AZIENDALE</div>
<svg style="position:absolute;left:1148.90px;top:82.30px" width="6.2" height="3.41" viewBox="0 0 10 5.5"><path d="M0 0h10L5 5.5z" fill="#222"/></svg>
<div style="position:absolute;left:1161.00px;top:71.00px;width:0.90px;height:587.50px;background:#d6d3cf;"></div>
<div style="position:absolute;left:1176.70px;top:79.40px;width:9.30px;height:1.60px;background:#3a3a3a;"></div>
<div style="position:absolute;left:1176.70px;top:83.60px;width:9.30px;height:1.60px;background:#3a3a3a;"></div>
<div style="position:absolute;left:1176.70px;top:87.80px;width:9.30px;height:1.60px;background:#3a3a3a;"></div>
<svg style="position:absolute;left:1172.25px;top:105.75px" width="18.5" height="18.5" viewBox="0 0 24 24"><rect x="3.5" y="3.5" width="17" height="17" fill="#fff" stroke="#555" stroke-width="1.2"/><rect x="3.5" y="3.5" width="17" height="3" fill="#555"/><path d="M6.5 11h11M6.5 15h11" stroke="#555" stroke-width="1"/><path d="M10 9.2v3.6M14 13.2v3.6" stroke="#3b8fd6" stroke-width="1.5"/></svg>
<svg style="position:absolute;left:1172.25px;top:134.75px" width="18.5" height="18.5" viewBox="0 0 24 24"><text x="0.5" y="16.5" font-size="17" fill="#333" font-family="Liberation Sans">A</text><path d="M12.5 21.5c-.5-2.5 1-5 3.5-5 1.5 0 2.5 1.2 2 2.7-.7 1.8-3 2.3-5.5 2.3z" fill="#4a94d6"/><path d="M17 15.5l5-6.5c.5-.7-.3-1.5-1-1l-5.5 6" fill="#fff" stroke="#444" stroke-width="1.1"/></svg>
<svg style="position:absolute;left:1172.25px;top:163.35px" width="18.5" height="18.5" viewBox="0 0 24 24"><path d="M2 5h7l2 2h10v14H2z" fill="#fcd27c" stroke="#f0a853" stroke-width="1.1"/><rect x="9" y="10" width="13" height="11" fill="#fff" stroke="#555" stroke-width="1.1"/><path d="M10 20l4-5 3 3 2-2 3 4z" fill="#3b8fd6"/></svg>
<svg style="position:absolute;left:1172.25px;top:192.75px" width="18.5" height="18.5" viewBox="0 0 24 24"><circle cx="12" cy="12" r="8.5" fill="#fff" stroke="#555" stroke-width="1.1"/><path d="M16 8l-5.5 2.5L8 16l5.5-2.5z" fill="#3b8fd6"/></svg>
<svg style="position:absolute;left:1172.25px;top:221.25px" width="18.5" height="18.5" viewBox="0 0 24 24"><text x="0" y="19" font-size="25" font-style="italic" fill="#3b8fd6" font-family="Liberation Serif">f</text><text x="9" y="21" font-size="17" font-style="italic" fill="#3b8fd6" font-family="Liberation Serif">x</text></svg>
<div style="position:absolute;left:1161.30px;top:338.70px;width:4.00px;height:49.80px;background:#a0a0a0;"></div>
<svg style="position:absolute;left:1162px;top:360px" width="3" height="5" viewBox="0 0 3 5"><path d="M0 0l3 2.5L0 5z" fill="#fff"/></svg>
<div style="position:absolute;left:21.50px;top:113.60px;width:1130.50px;height:518.40px;background:#fff;"></div>
<div style="position:absolute;left:0.00px;top:100.00px;width:21.50px;height:13.60px;background:#efeeec;"></div>
<div style="position:absolute;left:21.50px;top:224.65px;width:670.50px;height:13.75px;background:#f2f3f5;"></div>
<div style="position:absolute;left:21.50px;top:252.15px;width:670.50px;height:13.75px;background:#f2f3f5;"></div>
<div style="position:absolute;left:21.50px;top:307.15px;width:670.50px;height:13.75px;background:#f2f3f5;"></div>
<div style="position:absolute;left:21.50px;top:334.65px;width:670.50px;height:13.75px;background:#f2f3f5;"></div>
<div style="position:absolute;left:21.50px;top:389.65px;width:670.50px;height:13.75px;background:#f2f3f5;"></div>
<div style="position:absolute;left:21.50px;top:417.15px;width:670.50px;height:13.75px;background:#f2f3f5;"></div>
<div style="position:absolute;left:21.50px;top:444.65px;width:670.50px;height:13.75px;background:#f2f3f5;"></div>
<div style="position:absolute;left:21.50px;top:472.15px;width:670.50px;height:13.75px;background:#f2f3f5;"></div>
<div style="position:absolute;left:21.50px;top:554.65px;width:670.50px;height:13.75px;background:#f2f3f5;"></div>
<div style="position:absolute;left:21.50px;top:609.65px;width:670.50px;height:13.75px;background:#f2f3f5;"></div>
<div style="position:absolute;left:59.40px;top:113.60px;width:0.90px;height:518.40px;background:#dddddd;"></div>
<div style="position:absolute;left:125.65px;top:113.60px;width:0.90px;height:518.40px;background:#dddddd;"></div>
<div style="position:absolute;left:192.40px;top:113.60px;width:0.90px;height:518.40px;background:#dddddd;"></div>
<div style="position:absolute;left:258.65px;top:113.60px;width:0.90px;height:518.40px;background:#dddddd;"></div>
<div style="position:absolute;left:329.90px;top:113.60px;width:0.90px;height:518.40px;background:#dddddd;"></div>
<div style="position:absolute;left:401.15px;top:113.60px;width:0.90px;height:518.40px;background:#dddddd;"></div>
<div style="position:absolute;left:486.15px;top:113.60px;width:0.90px;height:518.40px;background:#dddddd;"></div>
<div style="position:absolute;left:572.40px;top:113.60px;width:0.90px;height:518.40px;background:#dddddd;"></div>
<div style="position:absolute;left:691.45px;top:113.60px;width:0.90px;height:518.40px;background:#dddddd;"></div>
<div style="position:absolute;left:732.80px;top:113.60px;width:0.90px;height:518.40px;background:#dddddd;"></div>
<div style="position:absolute;left:773.98px;top:113.60px;width:0.90px;height:518.40px;background:#dddddd;"></div>
<div style="position:absolute;left:815.16px;top:113.60px;width:0.90px;height:518.40px;background:#dddddd;"></div>
<div style="position:absolute;left:856.34px;top:113.60px;width:0.90px;height:518.40px;background:#dddddd;"></div>
<div style="position:absolute;left:897.52px;top:113.60px;width:0.90px;height:518.40px;background:#dddddd;"></div>
<div style="position:absolute;left:938.70px;top:113.60px;width:0.90px;height:518.40px;background:#dddddd;"></div>
<div style="position:absolute;left:979.88px;top:113.60px;width:0.90px;height:518.40px;background:#dddddd;"></div>
<div style="position:absolute;left:1021.06px;top:113.60px;width:0.90px;height:518.40px;background:#dddddd;"></div>
<div style="position:absolute;left:1062.24px;top:113.60px;width:0.90px;height:518.40px;background:#dddddd;"></div>
<div style="position:absolute;left:1103.42px;top:113.60px;width:0.90px;height:518.40px;background:#dddddd;"></div>
<div style="position:absolute;left:1144.60px;top:113.60px;width:0.90px;height:518.40px;background:#dddddd;"></div>
<div style="position:absolute;left:21.50px;top:144.90px;width:1130.50px;height:0.90px;background:#dddddd;"></div>
<div style="position:absolute;left:21.50px;top:167.60px;width:1130.50px;height:0.90px;background:#dddddd;"></div>
<div style="position:absolute;left:21.50px;top:181.70px;width:1130.50px;height:0.90px;background:#dddddd;"></div>
<div style="position:absolute;left:21.50px;top:210.20px;width:1130.50px;height:0.90px;background:#dddddd;"></div>
<div style="position:absolute;left:21.50px;top:223.95px;width:1130.50px;height:0.90px;background:#dddddd;"></div>
<div style="position:absolute;left:21.50px;top:237.70px;width:1130.50px;height:0.90px;background:#dddddd;"></div>
<div style="position:absolute;left:21.50px;top:251.45px;width:1130.50px;height:0.90px;background:#dddddd;"></div>
<div style="position:absolute;left:21.50px;top:265.20px;width:1130.50px;height:0.90px;background:#dddddd;"></div>
<div style="position:absolute;left:21.50px;top:278.95px;width:1130.50px;height:0.90px;background:#dddddd;"></div>
<div style="position:absolute;left:21.50px;top:292.70px;width:1130.50px;height:0.90px;background:#dddddd;"></div>
<div style="position:absolute;left:21.50px;top:306.45px;width:1130.50px;height:0.90px;background:#dddddd;"></div>
<div style="position:absolute;left:21.50px;top:320.20px;width:1130.50px;height:0.90px;background:#dddddd;"></div>
<div style="position:absolute;left:21.50px;top:333.95px;width:1130.50px;height:0.90px;background:#dddddd;"></div>
<div style="position:absolute;left:21.50px;top:347.70px;width:1130.50px;height:0.90px;background:#dddddd;"></div>
<div style="position:absolute;left:21.50px;top:361.45px;width:1130.50px;height:0.90px;background:#dddddd;"></div>
<div style="position:absolute;left:21.50px;top:375.20px;width:1130.50px;height:0.90px;background:#dddddd;"></div>
<div style="position:absolute;left:21.50px;top:388.95px;width:1130.50px;height:0.90px;background:#dddddd;"></div>
<div style="position:absolute;left:21.50px;top:402.70px;width:1130.50px;height:0.90px;background:#dddddd;"></div>
<div style="position:absolute;left:21.50px;top:416.45px;width:1130.50px;height:0.90px;background:#dddddd;"></div>
<div style="position:absolute;left:21.50px;top:430.20px;width:1130.50px;height:0.90px;background:#dddddd;"></div>
<div style="position:absolute;left:21.50px;top:443.95px;width:1130.50px;height:0.90px;background:#dddddd;"></div>
<div style="position:absolute;left:21.50px;top:457.70px;width:1130.50px;height:0.90px;background:#dddddd;"></div>
<div style="position:absolute;left:21.50px;top:471.45px;width:1130.50px;height:0.90px;background:#dddddd;"></div>
<div style="position:absolute;left:21.50px;top:485.20px;width:1130.50px;height:0.90px;background:#dddddd;"></div>
<div style="position:absolute;left:21.50px;top:498.95px;width:1130.50px;height:0.90px;background:#dddddd;"></div>
<div style="position:absolute;left:21.50px;top:512.70px;width:1130.50px;height:0.90px;background:#dddddd;"></div>
<div style="position:absolute;left:21.50px;top:526.45px;width:1130.50px;height:0.90px;background:#dddddd;"></div>
<div style="position:absolute;left:21.50px;top:540.20px;width:1130.50px;height:0.90px;background:#dddddd;"></div>
<div style="position:absolute;left:21.50px;top:553.95px;width:1130.50px;height:0.90px;background:#dddddd;"></div>
<div style="position:absolute;left:21.50px;top:567.70px;width:1130.50px;height:0.90px;background:#dddddd;"></div>
<div style="position:absolute;left:21.50px;top:581.45px;width:1130.50px;height:0.90px;background:#dddddd;"></div>
<div style="position:absolute;left:21.50px;top:595.20px;width:1130.50px;height:0.90px;background:#dddddd;"></div>
<div style="position:absolute;left:21.50px;top:608.95px;width:1130.50px;height:0.90px;background:#dddddd;"></div>
<div style="position:absolute;left:21.50px;top:622.70px;width:1130.50px;height:0.90px;background:#dddddd;"></div>
<div style="position:absolute;left:21.50px;top:182.40px;width:670.50px;height:28.50px;background:#1c3a8b;"></div>
<div style="position:absolute;left:22.00px;top:114.10px;width:669.50px;height:31.00px;background:#fff;"></div>
<div style="position:absolute;left:22.00px;top:146.10px;width:669.50px;height:21.70px;background:#fff;"></div>
<div class="g" style="position:absolute;left:255.60px;top:122.10px;font-size:14.53px;line-height:1;font-weight:bold;font-style:normal;color:#1f3a8f;white-space:nowrap;transform:scaleX(0.8731);transform-origin:0 0;"><span class="wv">REGISTRO</span> <span class="wv">ACCESSI</span> <span class="wv">AZIENDALE</span></div>
<div class="g" style="position:absolute;left:21.5px;top:145.6px;width:670.5px;height:22.700000000000017px;line-height:22.700000000000017px;text-align:center;font-size:9.3px;font-style:italic;color:#7f7f7f;white-space:nowrap;"><span class="wv">Anno</span> 2026 - <span class="wv">Aggiornato</span> <span class="wv">al</span> 25/03/2026</div>
<div class="g" style="position:absolute;left:29.90px;top:189.93px;font-size:10.60px;line-height:1;font-weight:bold;font-style:normal;color:#fff;white-space:nowrap;transform:scaleX(0.8774);transform-origin:0 0;-webkit-text-stroke:0.15px #fff;">ID</div>
<div style="position:absolute;left:48.40px;top:197.60px;width:10.60px;height:11.20px;background:#fff;border:0.5px solid #c8c8c8;"></div>
<svg style="position:absolute;left:50.90px;top:201.76px" width="5.6" height="3.08" viewBox="0 0 10 5.5"><path d="M0 0h10L5 5.5z" fill="#222"/></svg>
<div class="g" style="position:absolute;left:76.30px;top:189.93px;font-size:10.60px;line-height:1;font-weight:bold;font-style:normal;color:#fff;white-space:nowrap;transform:scaleX(0.9109);transform-origin:0 0;-webkit-text-stroke:0.15px #fff;">Data</div>
<div style="position:absolute;left:114.65px;top:197.60px;width:10.60px;height:11.20px;background:#fff;border:0.5px solid #c8c8c8;"></div>
<svg style="position:absolute;left:117.15px;top:201.76px" width="5.6" height="3.08" viewBox="0 0 10 5.5"><path d="M0 0h10L5 5.5z" fill="#222"/></svg>
<div class="g" style="position:absolute;left:131.90px;top:189.93px;font-size:10.60px;line-height:1;font-weight:bold;font-style:normal;color:#fff;white-space:nowrap;transform:scaleX(0.8425);transform-origin:0 0;-webkit-text-stroke:0.15px #fff;">Ora <span class="wv">Ingresso</span></div>
<div style="position:absolute;left:181.40px;top:197.60px;width:10.60px;height:11.20px;background:#fff;border:0.5px solid #c8c8c8;"></div>
<svg style="position:absolute;left:183.90px;top:201.76px" width="5.6" height="3.08" viewBox="0 0 10 5.5"><path d="M0 0h10L5 5.5z" fill="#222"/></svg>
<div class="g" style="position:absolute;left:196.70px;top:189.93px;font-size:10.60px;line-height:1;font-weight:bold;font-style:normal;color:#fff;white-space:nowrap;transform:scaleX(0.8530);transform-origin:0 0;-webkit-text-stroke:0.15px #fff;">Ora <span class="wv">Uscita</span></div>
<div style="position:absolute;left:247.65px;top:197.60px;width:10.60px;height:11.20px;background:#fff;border:0.5px solid #c8c8c8;"></div>
<svg style="position:absolute;left:250.15px;top:201.76px" width="5.6" height="3.08" viewBox="0 0 10 5.5"><path d="M0 0h10L5 5.5z" fill="#222"/></svg>
<div class="g" style="position:absolute;left:275.60px;top:189.93px;font-size:10.60px;line-height:1;font-weight:bold;font-style:normal;color:#fff;white-space:nowrap;transform:scaleX(0.8857);transform-origin:0 0;-webkit-text-stroke:0.15px #fff;">Nome</div>
<div style="position:absolute;left:318.90px;top:197.60px;width:10.60px;height:11.20px;background:#fff;border:0.5px solid #c8c8c8;"></div>
<svg style="position:absolute;left:321.40px;top:201.76px" width="5.6" height="3.08" viewBox="0 0 10 5.5"><path d="M0 0h10L5 5.5z" fill="#222"/></svg>
<div class="g" style="position:absolute;left:339.00px;top:189.93px;font-size:10.60px;line-height:1;font-weight:bold;font-style:normal;color:#fff;white-space:nowrap;transform:scaleX(0.8288);transform-origin:0 0;-webkit-text-stroke:0.15px #fff;"><span class="wv">Cognome</span></div>
<div style="position:absolute;left:390.15px;top:197.60px;width:10.60px;height:11.20px;background:#fff;border:0.5px solid #c8c8c8;"></div>
<svg style="position:absolute;left:392.65px;top:201.76px" width="5.6" height="3.08" viewBox="0 0 10 5.5"><path d="M0 0h10L5 5.5z" fill="#222"/></svg>
<div class="g" style="position:absolute;left:420.00px;top:189.93px;font-size:10.60px;line-height:1;font-weight:bold;font-style:normal;color:#fff;white-space:nowrap;transform:scaleX(0.8860);transform-origin:0 0;-webkit-text-stroke:0.15px #fff;"><span class="wv">Reparto</span></div>
<div style="position:absolute;left:475.15px;top:197.60px;width:10.60px;height:11.20px;background:#fff;border:0.5px solid #c8c8c8;"></div>
<svg style="position:absolute;left:477.65px;top:201.76px" width="5.6" height="3.08" viewBox="0 0 10 5.5"><path d="M0 0h10L5 5.5z" fill="#222"/></svg>
<div class="g" style="position:absolute;left:495.20px;top:189.93px;font-size:10.60px;line-height:1;font-weight:bold;font-style:normal;color:#fff;white-space:nowrap;transform:scaleX(0.8343);transform-origin:0 0;-webkit-text-stroke:0.15px #fff;"><span class="wv">Tipo</span> <span class="wv">Accesso</span></div>
<div style="position:absolute;left:561.40px;top:197.60px;width:10.60px;height:11.20px;background:#fff;border:0.5px solid #c8c8c8;"></div>
<svg style="position:absolute;left:563.90px;top:201.76px" width="5.6" height="3.08" viewBox="0 0 10 5.5"><path d="M0 0h10L5 5.5z" fill="#222"/></svg>
<div class="g" style="position:absolute;left:614.70px;top:189.93px;font-size:10.60px;line-height:1;font-weight:bold;font-style:normal;color:#fff;white-space:nowrap;transform:scaleX(0.9434);transform-origin:0 0;-webkit-text-stroke:0.15px #fff;">Note</div>
<div style="position:absolute;left:680.90px;top:197.60px;width:10.60px;height:11.20px;background:#fff;border:0.5px solid #c8c8c8;"></div>
<svg style="position:absolute;left:683.40px;top:201.76px" width="5.6" height="3.08" viewBox="0 0 10 5.5"><path d="M0 0h10L5 5.5z" fill="#222"/></svg>
<div class="c n" style="left:1.50px;top:210.90px;width:78.00px;text-align:center;">1</div>
<div class="c n" style="left:39.50px;top:210.90px;width:106.25px;text-align:center;">24/02/2026</div>
<div class="c n" style="left:105.75px;top:210.90px;width:106.75px;text-align:center;">08:29</div>
<div class="c n" style="left:172.50px;top:210.90px;width:106.25px;text-align:center;">18:36</div>
<div class="c t" style="left:260.15px;top:210.90px;"><span class="wv">Luca</span></div>
<div class="c t" style="left:331.40px;top:210.90px;">Romano</div>
<div class="c t" style="left:381.25px;top:210.90px;width:125.00px;text-align:center;"><span class="wv">Qualità</span></div>
<div class="c t" style="left:466.25px;top:210.90px;width:126.25px;text-align:center;"><span class="wv">Ingresso</span> <span class="wv">Normale</span></div>
<div class="c t" style="left:573.90px;top:210.90px;"><span class="wv">Regolare</span></div>
<div class="c n" style="left:1.50px;top:224.65px;width:78.00px;text-align:center;">2</div>
<div class="c n" style="left:39.50px;top:224.65px;width:106.25px;text-align:center;">17/02/2026</div>
<div class="c n" style="left:105.75px;top:224.65px;width:106.75px;text-align:center;">09:39</div>
<div class="c n" style="left:172.50px;top:224.65px;width:106.25px;text-align:center;">18:25</div>
<div class="c t" style="left:260.15px;top:224.65px;"><span class="wv">Valentina</span></div>
<div class="c t" style="left:331.40px;top:224.65px;">Gallo</div>
<div class="c t" style="left:381.25px;top:224.65px;width:125.00px;text-align:center;"><span class="wv">Vendite</span></div>
<div class="c t" style="left:466.25px;top:224.65px;width:126.25px;text-align:center;"><span class="wv">Ingresso</span> <span class="wv">Normale</span></div>
<div class="c n" style="left:1.50px;top:238.40px;width:78.00px;text-align:center;">3</div>
<div class="c n" style="left:39.50px;top:238.40px;width:106.25px;text-align:center;">07/01/2026</div>
<div class="c n" style="left:105.75px;top:238.40px;width:106.75px;text-align:center;">07:29</div>
<div class="c n" style="left:172.50px;top:238.40px;width:106.25px;text-align:center;">15:01</div>
<div class="c t" style="left:260.15px;top:238.40px;">Marco</div>
<div class="c t" style="left:331.40px;top:238.40px;"><span class="wv">Marino</span></div>
<div class="c t" style="left:381.25px;top:238.40px;width:125.00px;text-align:center;">Marketing</div>
<div class="c t" style="left:466.25px;top:238.40px;width:126.25px;text-align:center;">Smart Working</div>
<div class="c n" style="left:1.50px;top:252.15px;width:78.00px;text-align:center;">4</div>
<div class="c n" style="left:39.50px;top:252.15px;width:106.25px;text-align:center;">08/01/2026</div>
<div class="c n" style="left:105.75px;top:252.15px;width:106.75px;text-align:center;">09:02</div>
<div class="c n" style="left:172.50px;top:252.15px;width:106.25px;text-align:center;">17:39</div>
<div class="c t" style="left:260.15px;top:252.15px;"><span class="wv">Alessandro</span></div>
<div class="c t" style="left:331.40px;top:252.15px;"><span class="wv">Ricci</span></div>
<div class="c t" style="left:381.25px;top:252.15px;width:125.00px;text-align:center;"><span class="wv">Vendite</span></div>
<div class="c t" style="left:466.25px;top:252.15px;width:126.25px;text-align:center;"><span class="wv">Ingresso</span> <span class="wv">Normale</span></div>
<div class="c n" style="left:1.50px;top:293.40px;width:78.00px;text-align:center;">7</div>
<div class="c n" style="left:39.50px;top:293.40px;width:106.25px;text-align:center;">09/02/2026</div>
<div class="c n" style="left:105.75px;top:293.40px;width:106.75px;text-align:center;">07:31</div>
<div class="c n" style="left:172.50px;top:293.40px;width:106.25px;text-align:center;">17:21</div>
<div class="c t" style="left:260.15px;top:293.40px;">Federico</div>
<div class="c t" style="left:331.40px;top:293.40px;"><span class="wv">Rossi</span></div>
<div class="c t" style="left:381.25px;top:293.40px;width:125.00px;text-align:center;">IT</div>
<div class="c t" style="left:466.25px;top:293.40px;width:126.25px;text-align:center;">Smart Working</div>
<div class="c n" style="left:1.50px;top:307.15px;width:78.00px;text-align:center;">8</div>
<div class="c n" style="left:39.50px;top:307.15px;width:106.25px;text-align:center;">18/02/2026</div>
<div class="c n" style="left:105.75px;top:307.15px;width:106.75px;text-align:center;">07:02</div>
<div class="c n" style="left:172.50px;top:307.15px;width:106.25px;text-align:center;">17:13</div>
<div class="c t" style="left:260.15px;top:307.15px;">Sofia</div>
<div class="c t" style="left:331.40px;top:307.15px;"><span class="wv">Conti</span></div>
<div class="c t" style="left:381.25px;top:307.15px;width:125.00px;text-align:center;"><span class="wv">Qualità</span></div>
<div class="c t" style="left:466.25px;top:307.15px;width:126.25px;text-align:center;">Smart Working</div>
<div class="c t" style="left:573.90px;top:307.15px;"><span class="wv">Pausa</span> <span class="wv">prolungata</span></div>
<div class="c n" style="left:1.50px;top:334.65px;width:78.00px;text-align:center;">10</div>
<div class="c n" style="left:39.50px;top:334.65px;width:106.25px;text-align:center;">28/01/2026</div>
<div class="c n" style="left:105.75px;top:334.65px;width:106.75px;text-align:center;">09:36</div>
<div class="c n" style="left:172.50px;top:334.65px;width:106.25px;text-align:center;">19:04</div>
<div class="c t" style="left:260.15px;top:334.65px;">Francesca</div>
<div class="c t" style="left:331.40px;top:334.65px;"><span class="wv">Bianchi</span></div>
<div class="c t" style="left:381.25px;top:334.65px;width:125.00px;text-align:center;"><span class="wv">Vendite</span></div>
<div class="c t" style="left:466.25px;top:334.65px;width:126.25px;text-align:center;"><span class="wv">Ingresso</span> <span class="wv">Normale</span></div>
<div class="c n" style="left:1.50px;top:375.90px;width:78.00px;text-align:center;">13</div>
<div class="c n" style="left:39.50px;top:375.90px;width:106.25px;text-align:center;">26/01/2026</div>
<div class="c n" style="left:105.75px;top:375.90px;width:106.75px;text-align:center;">07:03</div>
<div class="c n" style="left:172.50px;top:375.90px;width:106.25px;text-align:center;">16:05</div>
<div class="c t" style="left:260.15px;top:375.90px;">Martina</div>
<div class="c t" style="left:331.40px;top:375.90px;"><span class="wv">Greco</span></div>
<div class="c t" style="left:381.25px;top:375.90px;width:125.00px;text-align:center;"><span class="wv">Produzione</span></div>
<div class="c t" style="left:466.25px;top:375.90px;width:126.25px;text-align:center;"><span class="wv">Festivo</span></div>
<div class="c n" style="left:1.50px;top:389.65px;width:78.00px;text-align:center;">14</div>
<div class="c n" style="left:39.50px;top:389.65px;width:106.25px;text-align:center;">12/01/2026</div>
<div class="c n" style="left:105.75px;top:389.65px;width:106.75px;text-align:center;">09:56</div>
<div class="c n" style="left:172.50px;top:389.65px;width:106.25px;text-align:center;">18:13</div>
<div class="c t" style="left:260.15px;top:389.65px;"><span class="wv">Davide</span></div>
<div class="c t" style="left:331.40px;top:389.65px;"><span class="wv">Greco</span></div>
<div class="c t" style="left:381.25px;top:389.65px;width:125.00px;text-align:center;"><span class="wv">Vendite</span></div>
<div class="c t" style="left:466.25px;top:389.65px;width:126.25px;text-align:center;">Smart Working</div>
<div class="c t" style="left:573.90px;top:389.65px;"><span class="wv">Pausa</span> <span class="wv">prolungata</span></div>
<div class="c n" style="left:1.50px;top:403.40px;width:78.00px;text-align:center;">15</div>
<div class="c n" style="left:39.50px;top:403.40px;width:106.25px;text-align:center;">25/03/2026</div>
<div class="c n" style="left:105.75px;top:403.40px;width:106.75px;text-align:center;">08:24</div>
<div class="c n" style="left:172.50px;top:403.40px;width:106.25px;text-align:center;">15:57</div>
<div class="c t" style="left:260.15px;top:403.40px;"><span class="wv">Chiara</span></div>
<div class="c t" style="left:331.40px;top:403.40px;">Russo</div>
<div class="c t" style="left:381.25px;top:403.40px;width:125.00px;text-align:center;"><span class="wv">Vendite</span></div>
<div class="c t" style="left:466.25px;top:403.40px;width:126.25px;text-align:center;"><span class="wv">Notturno</span></div>
<div class="c t" style="left:573.90px;top:403.40px;"><span class="wv">Regolare</span></div>
<div class="c n" style="left:1.50px;top:417.15px;width:78.00px;text-align:center;">16</div>
<div class="c n" style="left:39.50px;top:417.15px;width:106.25px;text-align:center;">23/03/2026</div>
<div class="c n" style="left:105.75px;top:417.15px;width:106.75px;text-align:center;">07:38</div>
<div class="c n" style="left:172.50px;top:417.15px;width:106.25px;text-align:center;">15:11</div>
<div class="c t" style="left:260.15px;top:417.15px;">Francesca</div>
<div class="c t" style="left:331.40px;top:417.15px;"><span class="wv">Ricci</span></div>
<div class="c t" style="left:381.25px;top:417.15px;width:125.00px;text-align:center;"><span class="wv">Amministrazione</span></div>
<div class="c t" style="left:466.25px;top:417.15px;width:126.25px;text-align:center;">Smart Working</div>
<div class="c n" style="left:1.50px;top:430.90px;width:78.00px;text-align:center;">17</div>
<div class="c n" style="left:39.50px;top:430.90px;width:106.25px;text-align:center;">25/02/2026</div>
<div class="c n" style="left:105.75px;top:430.90px;width:106.75px;text-align:center;">08:22</div>
<div class="c n" style="left:172.50px;top:430.90px;width:106.25px;text-align:center;">18:47</div>
<div class="c t" style="left:260.15px;top:430.90px;">Sofia</div>
<div class="c t" style="left:331.40px;top:430.90px;"><span class="wv">Ricci</span></div>
<div class="c t" style="left:381.25px;top:430.90px;width:125.00px;text-align:center;"><span class="wv">Qualità</span></div>
<div class="c t" style="left:466.25px;top:430.90px;width:126.25px;text-align:center;"><span class="wv">Ingresso</span> <span class="wv">Normale</span></div>
<div class="c n" style="left:1.50px;top:444.65px;width:78.00px;text-align:center;">18</div>
<div class="c n" style="left:39.50px;top:444.65px;width:106.25px;text-align:center;">06/01/2026</div>
<div class="c n" style="left:105.75px;top:444.65px;width:106.75px;text-align:center;">09:52</div>
<div class="c n" style="left:172.50px;top:444.65px;width:106.25px;text-align:center;">17:15</div>
<div class="c t" style="left:260.15px;top:444.65px;">Simone</div>
<div class="c t" style="left:331.40px;top:444.65px;">Gallo</div>
<div class="c t" style="left:381.25px;top:444.65px;width:125.00px;text-align:center;"><span class="wv">Vendite</span></div>
<div class="c t" style="left:466.25px;top:444.65px;width:126.25px;text-align:center;">Smart Working</div>
<div class="c n" style="left:1.50px;top:472.15px;width:78.00px;text-align:center;">20</div>
<div class="c n" style="left:39.50px;top:472.15px;width:106.25px;text-align:center;">28/01/2026</div>
<div class="c n" style="left:105.75px;top:472.15px;width:106.75px;text-align:center;">08:50</div>
<div class="c n" style="left:172.50px;top:472.15px;width:106.25px;text-align:center;">17:04</div>
<div class="c t" style="left:260.15px;top:472.15px;">Martina</div>
<div class="c t" style="left:331.40px;top:472.15px;"><span class="wv">Marino</span></div>
<div class="c t" style="left:381.25px;top:472.15px;width:125.00px;text-align:center;">HR</div>
<div class="c t" style="left:466.25px;top:472.15px;width:126.25px;text-align:center;"><span class="wv">Ingresso</span> <span class="wv">Normale</span></div>
<div class="c n" style="left:1.50px;top:513.40px;width:78.00px;text-align:center;">23</div>
<div class="c n" style="left:39.50px;top:513.40px;width:106.25px;text-align:center;">25/03/2026</div>
<div class="c n" style="left:105.75px;top:513.40px;width:106.75px;text-align:center;">09:40</div>
<div class="c n" style="left:172.50px;top:513.40px;width:106.25px;text-align:center;">18:24</div>
<div class="c t" style="left:260.15px;top:513.40px;"><span class="wv">Valentina</span></div>
<div class="c t" style="left:331.40px;top:513.40px;">Colombo</div>
<div class="c t" style="left:381.25px;top:513.40px;width:125.00px;text-align:center;">HR</div>
<div class="c t" style="left:466.25px;top:513.40px;width:126.25px;text-align:center;"><span class="wv">Ingresso</span> <span class="wv">Normale</span></div>
<div class="c n" style="left:1.50px;top:540.90px;width:78.00px;text-align:center;">25</div>
<div class="c n" style="left:39.50px;top:540.90px;width:106.25px;text-align:center;">06/03/2026</div>
<div class="c n" style="left:105.75px;top:540.90px;width:106.75px;text-align:center;">08:53</div>
<div class="c n" style="left:172.50px;top:540.90px;width:106.25px;text-align:center;">16:26</div>
<div class="c t" style="left:260.15px;top:540.90px;">Federico</div>
<div class="c t" style="left:331.40px;top:540.90px;"><span class="wv">Rossi</span></div>
<div class="c t" style="left:381.25px;top:540.90px;width:125.00px;text-align:center;">HR</div>
<div class="c t" style="left:466.25px;top:540.90px;width:126.25px;text-align:center;">Smart Working</div>
<div class="c n" style="left:1.50px;top:554.65px;width:78.00px;text-align:center;">26</div>
<div class="c n" style="left:39.50px;top:554.65px;width:106.25px;text-align:center;">24/02/2026</div>
<div class="c n" style="left:105.75px;top:554.65px;width:106.75px;text-align:center;">07:20</div>
<div class="c n" style="left:172.50px;top:554.65px;width:106.25px;text-align:center;">16:39</div>
<div class="c t" style="left:260.15px;top:554.65px;"><span class="wv">Valentina</span></div>
<div class="c t" style="left:331.40px;top:554.65px;"><span class="wv">Esposito</span></div>
<div class="c t" style="left:381.25px;top:554.65px;width:125.00px;text-align:center;">IT</div>
<div class="c t" style="left:466.25px;top:554.65px;width:126.25px;text-align:center;"><span class="wv">Ingresso</span> <span class="wv">Normale</span></div>
<div class="c n" style="left:1.50px;top:568.40px;width:78.00px;text-align:center;">27</div>
<div class="c n" style="left:39.50px;top:568.40px;width:106.25px;text-align:center;">30/01/2026</div>
<div class="c n" style="left:105.75px;top:568.40px;width:106.75px;text-align:center;">07:50</div>
<div class="c n" style="left:172.50px;top:568.40px;width:106.25px;text-align:center;">15:46</div>
<div class="c t" style="left:260.15px;top:568.40px;"><span class="wv">Alessandro</span></div>
<div class="c t" style="left:331.40px;top:568.40px;">Colombo</div>
<div class="c t" style="left:381.25px;top:568.40px;width:125.00px;text-align:center;"><span class="wv">Logistica</span></div>
<div class="c t" style="left:466.25px;top:568.40px;width:126.25px;text-align:center;"><span class="wv">Ingresso</span> <span class="wv">Normale</span></div>
<div class="c t" style="left:573.90px;top:568.40px;">In <span class="wv">ritardo</span></div>
<div class="c n" style="left:1.50px;top:609.65px;width:78.00px;text-align:center;">30</div>
<div class="c n" style="left:39.50px;top:609.65px;width:106.25px;text-align:center;">23/02/2026</div>
<div class="c n" style="left:105.75px;top:609.65px;width:106.75px;text-align:center;">08:38</div>
<div class="c n" style="left:172.50px;top:609.65px;width:106.25px;text-align:center;">19:02</div>
<div class="c t" style="left:260.15px;top:609.65px;">Andrea</div>
<div class="c t" style="left:331.40px;top:609.65px;">Ferrari</div>
<div class="c t" style="left:381.25px;top:609.65px;width:125.00px;text-align:center;"><span class="wv">Vendite</span></div>
<div class="c t" style="left:466.25px;top:609.65px;width:126.25px;text-align:center;">Smart Working</div>
<div class="c n" style="left:1.50px;top:623.40px;width:78.00px;text-align:center;">31</div>
<div class="c n" style="left:39.50px;top:623.40px;width:106.25px;text-align:center;">13/03/2026</div>
<div class="c n" style="left:105.75px;top:623.40px;width:106.75px;text-align:center;">08:08</div>
<div class="c n" style="left:172.50px;top:623.40px;width:106.25px;text-align:center;">17:30</div>
<div class="c t" style="left:260.15px;top:623.40px;">Luca</div>
<div class="c t" style="left:331.40px;top:623.40px;">Esposito</div>
<div class="c t" style="left:381.25px;top:623.40px;width:125.00px;text-align:center;">IT</div>
<div class="c t" style="left:466.25px;top:623.40px;width:126.25px;text-align:center;">Straordinario</div>
<div class="c t" style="left:573.90px;top:623.40px;">Regolare</div>
<div style="position:absolute;left:21.50px;top:113.30px;width:671.10px;height:33.30px;border-right:1.5px solid #6a92ca;border-bottom:1.6px solid #6a92ca;background:transparent;"></div>
<div style="position:absolute;left:689.60px;top:144.00px;width:3.80px;height:3.60px;background:#3a7be0;"></div>
<div style="position:absolute;left:21.50px;top:100.00px;width:38.00px;height:13.60px;background:#3584e4;"></div>
<div class="g" style="position:absolute;left:21.50px;top:100px;width:38.00px;height:13.75px;line-height:15px;text-align:center;font-size:8.8px;font-weight:bold;color:#fff;-webkit-text-stroke:0.1px #fff;">A</div>
<div style="position:absolute;left:59.10px;top:100.00px;width:0.80px;height:13.60px;background:#2f78d2;"></div>
<div style="position:absolute;left:59.50px;top:100.00px;width:66.25px;height:13.60px;background:#3584e4;"></div>
<div class="g" style="position:absolute;left:59.50px;top:100px;width:66.25px;height:13.75px;line-height:15px;text-align:center;font-size:8.8px;font-weight:bold;color:#fff;-webkit-text-stroke:0.1px #fff;">B</div>
<div style="position:absolute;left:125.35px;top:100.00px;width:0.80px;height:13.60px;background:#2f78d2;"></div>
<div style="position:absolute;left:125.75px;top:100.00px;width:66.75px;height:13.60px;background:#3584e4;"></div>
<div class="g" style="position:absolute;left:125.75px;top:100px;width:66.75px;height:13.75px;line-height:15px;text-align:center;font-size:8.8px;font-weight:bold;color:#fff;-webkit-text-stroke:0.1px #fff;">C</div>
<div style="position:absolute;left:192.10px;top:100.00px;width:0.80px;height:13.60px;background:#2f78d2;"></div>
<div style="position:absolute;left:192.50px;top:100.00px;width:66.25px;height:13.60px;background:#3584e4;"></div>
<div class="g" style="position:absolute;left:192.50px;top:100px;width:66.25px;height:13.75px;line-height:15px;text-align:center;font-size:8.8px;font-weight:bold;color:#fff;-webkit-text-stroke:0.1px #fff;">D</div>
<div style="position:absolute;left:258.35px;top:100.00px;width:0.80px;height:13.60px;background:#2f78d2;"></div>
<div style="position:absolute;left:258.75px;top:100.00px;width:71.25px;height:13.60px;background:#3584e4;"></div>
<div class="g" style="position:absolute;left:258.75px;top:100px;width:71.25px;height:13.75px;line-height:15px;text-align:center;font-size:8.8px;font-weight:bold;color:#fff;-webkit-text-stroke:0.1px #fff;">E</div>
<div style="position:absolute;left:329.60px;top:100.00px;width:0.80px;height:13.60px;background:#2f78d2;"></div>
<div style="position:absolute;left:330.00px;top:100.00px;width:71.25px;height:13.60px;background:#3584e4;"></div>
<div class="g" style="position:absolute;left:330.00px;top:100px;width:71.25px;height:13.75px;line-height:15px;text-align:center;font-size:8.8px;font-weight:bold;color:#fff;-webkit-text-stroke:0.1px #fff;">F</div>
<div style="position:absolute;left:400.85px;top:100.00px;width:0.80px;height:13.60px;background:#2f78d2;"></div>
<div style="position:absolute;left:401.25px;top:100.00px;width:85.00px;height:13.60px;background:#3584e4;"></div>
<div class="g" style="position:absolute;left:401.25px;top:100px;width:85.00px;height:13.75px;line-height:15px;text-align:center;font-size:8.8px;font-weight:bold;color:#fff;-webkit-text-stroke:0.1px #fff;">G</div>
<div style="position:absolute;left:485.85px;top:100.00px;width:0.80px;height:13.60px;background:#2f78d2;"></div>
<div style="position:absolute;left:486.25px;top:100.00px;width:86.25px;height:13.60px;background:#3584e4;"></div>
<div class="g" style="position:absolute;left:486.25px;top:100px;width:86.25px;height:13.75px;line-height:15px;text-align:center;font-size:8.8px;font-weight:bold;color:#fff;-webkit-text-stroke:0.1px #fff;">H</div>
<div style="position:absolute;left:572.10px;top:100.00px;width:0.80px;height:13.60px;background:#2f78d2;"></div>
<div style="position:absolute;left:572.50px;top:100.00px;width:119.50px;height:13.60px;background:#3584e4;"></div>
<div class="g" style="position:absolute;left:572.50px;top:100px;width:119.50px;height:13.75px;line-height:15px;text-align:center;font-size:8.8px;font-weight:bold;color:#fff;-webkit-text-stroke:0.1px #fff;">I</div>
<div style="position:absolute;left:691.60px;top:100.00px;width:0.80px;height:13.60px;background:#2f78d2;"></div>
<div style="position:absolute;left:692.00px;top:100.00px;width:40.90px;height:13.60px;background:#e4e3e1;border-top:0.8px solid #cfcdca;border-bottom:0.8px solid #d3d1ce;"></div>
<div class="g" style="position:absolute;left:692.00px;top:100px;width:40.90px;height:13.75px;line-height:15.6px;text-align:center;font-size:8.7px;color:#3a3a3a;-webkit-text-stroke:0.15px #3a3a3a;">J</div>
<div style="position:absolute;left:732.50px;top:100.00px;width:0.80px;height:13.60px;background:#cfcdca;"></div>
<div style="position:absolute;left:732.90px;top:100.00px;width:41.18px;height:13.60px;background:#e4e3e1;border-top:0.8px solid #cfcdca;border-bottom:0.8px solid #d3d1ce;"></div>
<div class="g" style="position:absolute;left:732.90px;top:100px;width:41.18px;height:13.75px;line-height:15.6px;text-align:center;font-size:8.7px;color:#3a3a3a;-webkit-text-stroke:0.15px #3a3a3a;">K</div>
<div style="position:absolute;left:773.68px;top:100.00px;width:0.80px;height:13.60px;background:#cfcdca;"></div>
<div style="position:absolute;left:774.08px;top:100.00px;width:41.18px;height:13.60px;background:#e4e3e1;border-top:0.8px solid #cfcdca;border-bottom:0.8px solid #d3d1ce;"></div>
<div class="g" style="position:absolute;left:774.08px;top:100px;width:41.18px;height:13.75px;line-height:15.6px;text-align:center;font-size:8.7px;color:#3a3a3a;-webkit-text-stroke:0.15px #3a3a3a;">L</div>
<div style="position:absolute;left:814.86px;top:100.00px;width:0.80px;height:13.60px;background:#cfcdca;"></div>
<div style="position:absolute;left:815.26px;top:100.00px;width:41.18px;height:13.60px;background:#e4e3e1;border-top:0.8px solid #cfcdca;border-bottom:0.8px solid #d3d1ce;"></div>
<div class="g" style="position:absolute;left:815.26px;top:100px;width:41.18px;height:13.75px;line-height:15.6px;text-align:center;font-size:8.7px;color:#3a3a3a;-webkit-text-stroke:0.15px #3a3a3a;">M</div>
<div style="position:absolute;left:856.04px;top:100.00px;width:0.80px;height:13.60px;background:#cfcdca;"></div>
<div style="position:absolute;left:856.44px;top:100.00px;width:41.18px;height:13.60px;background:#e4e3e1;border-top:0.8px solid #cfcdca;border-bottom:0.8px solid #d3d1ce;"></div>
<div class="g" style="position:absolute;left:856.44px;top:100px;width:41.18px;height:13.75px;line-height:15.6px;text-align:center;font-size:8.7px;color:#3a3a3a;-webkit-text-stroke:0.15px #3a3a3a;">N</div>
<div style="position:absolute;left:897.22px;top:100.00px;width:0.80px;height:13.60px;background:#cfcdca;"></div>
<div style="position:absolute;left:897.62px;top:100.00px;width:41.18px;height:13.60px;background:#e4e3e1;border-top:0.8px solid #cfcdca;border-bottom:0.8px solid #d3d1ce;"></div>
<div class="g" style="position:absolute;left:897.62px;top:100px;width:41.18px;height:13.75px;line-height:15.6px;text-align:center;font-size:8.7px;color:#3a3a3a;-webkit-text-stroke:0.15px #3a3a3a;">O</div>
<div style="position:absolute;left:938.40px;top:100.00px;width:0.80px;height:13.60px;background:#cfcdca;"></div>
<div style="position:absolute;left:938.80px;top:100.00px;width:41.18px;height:13.60px;background:#e4e3e1;border-top:0.8px solid #cfcdca;border-bottom:0.8px solid #d3d1ce;"></div>
<div class="g" style="position:absolute;left:938.80px;top:100px;width:41.18px;height:13.75px;line-height:15.6px;text-align:center;font-size:8.7px;color:#3a3a3a;-webkit-text-stroke:0.15px #3a3a3a;">P</div>
<div style="position:absolute;left:979.58px;top:100.00px;width:0.80px;height:13.60px;background:#cfcdca;"></div>
<div style="position:absolute;left:979.98px;top:100.00px;width:41.18px;height:13.60px;background:#e4e3e1;border-top:0.8px solid #cfcdca;border-bottom:0.8px solid #d3d1ce;"></div>
<div class="g" style="position:absolute;left:979.98px;top:100px;width:41.18px;height:13.75px;line-height:15.6px;text-align:center;font-size:8.7px;color:#3a3a3a;-webkit-text-stroke:0.15px #3a3a3a;">Q</div>
<div style="position:absolute;left:1020.76px;top:100.00px;width:0.80px;height:13.60px;background:#cfcdca;"></div>
<div style="position:absolute;left:1021.16px;top:100.00px;width:41.18px;height:13.60px;background:#e4e3e1;border-top:0.8px solid #cfcdca;border-bottom:0.8px solid #d3d1ce;"></div>
<div class="g" style="position:absolute;left:1021.16px;top:100px;width:41.18px;height:13.75px;line-height:15.6px;text-align:center;font-size:8.7px;color:#3a3a3a;-webkit-text-stroke:0.15px #3a3a3a;">R</div>
<div style="position:absolute;left:1061.94px;top:100.00px;width:0.80px;height:13.60px;background:#cfcdca;"></div>
<div style="position:absolute;left:1062.34px;top:100.00px;width:41.18px;height:13.60px;background:#e4e3e1;border-top:0.8px solid #cfcdca;border-bottom:0.8px solid #d3d1ce;"></div>
<div class="g" style="position:absolute;left:1062.34px;top:100px;width:41.18px;height:13.75px;line-height:15.6px;text-align:center;font-size:8.7px;color:#3a3a3a;-webkit-text-stroke:0.15px #3a3a3a;">S</div>
<div style="position:absolute;left:1103.12px;top:100.00px;width:0.80px;height:13.60px;background:#cfcdca;"></div>
<div style="position:absolute;left:1103.52px;top:100.00px;width:41.18px;height:13.60px;background:#e4e3e1;border-top:0.8px solid #cfcdca;border-bottom:0.8px solid #d3d1ce;"></div>
<div class="g" style="position:absolute;left:1103.52px;top:100px;width:41.18px;height:13.75px;line-height:15.6px;text-align:center;font-size:8.7px;color:#3a3a3a;-webkit-text-stroke:0.15px #3a3a3a;">T</div>
<div style="position:absolute;left:1144.30px;top:100.00px;width:0.80px;height:13.60px;background:#cfcdca;"></div>
<div style="position:absolute;left:1144.70px;top:100.00px;width:7.30px;height:13.60px;background:#e4e3e1;border-top:0.8px solid #cfcdca;border-bottom:0.8px solid #d3d1ce;"></div>
<div style="position:absolute;left:1151.60px;top:100.00px;width:0.80px;height:13.60px;background:#cfcdca;"></div>
<div style="position:absolute;left:0.00px;top:113.60px;width:21.50px;height:32.00px;background:#3584e4;"></div>
<div class="g" style="position:absolute;left:0px;top:113.60px;width:21.50px;height:32.00px;line-height:34.20px;text-align:center;font-size:9px;color:#fff;-webkit-text-stroke:0.12px #fff;overflow:hidden;">1</div>
<div style="position:absolute;left:0.00px;top:145.60px;width:21.50px;height:22.70px;background:#e4e3e1;border-bottom:0.8px solid #d3d1ce;"></div>
<div class="g" style="position:absolute;left:0px;top:145.60px;width:21.50px;height:22.70px;line-height:24.90px;text-align:center;font-size:9px;color:#444;-webkit-text-stroke:0.12px #444;overflow:hidden;">2</div>
<div style="position:absolute;left:0.00px;top:168.30px;width:21.50px;height:14.10px;background:#e4e3e1;border-bottom:0.8px solid #d3d1ce;"></div>
<div class="g" style="position:absolute;left:0px;top:168.30px;width:21.50px;height:14.10px;line-height:16.30px;text-align:center;font-size:9px;color:#444;-webkit-text-stroke:0.12px #444;overflow:hidden;">3</div>
<div style="position:absolute;left:0.00px;top:182.40px;width:21.50px;height:28.50px;background:#e4e3e1;border-bottom:0.8px solid #d3d1ce;"></div>
<div class="g" style="position:absolute;left:0px;top:182.40px;width:21.50px;height:28.50px;line-height:30.70px;text-align:center;font-size:9px;color:#444;-webkit-text-stroke:0.12px #444;overflow:hidden;">4</div>
<div style="position:absolute;left:0.00px;top:210.90px;width:21.50px;height:13.75px;background:#e4e3e1;border-bottom:0.8px solid #d3d1ce;"></div>
<div class="g" style="position:absolute;left:0px;top:210.90px;width:21.50px;height:13.75px;line-height:15.95px;text-align:center;font-size:9px;color:#444;-webkit-text-stroke:0.12px #444;overflow:hidden;">5</div>
<div style="position:absolute;left:0.00px;top:224.65px;width:21.50px;height:13.75px;background:#e4e3e1;border-bottom:0.8px solid #d3d1ce;"></div>
<div class="g" style="position:absolute;left:0px;top:224.65px;width:21.50px;height:13.75px;line-height:15.95px;text-align:center;font-size:9px;color:#444;-webkit-text-stroke:0.12px #444;overflow:hidden;">6</div>
<div style="position:absolute;left:0.00px;top:238.40px;width:21.50px;height:13.75px;background:#e4e3e1;border-bottom:0.8px solid #d3d1ce;"></div>
<div class="g" style="position:absolute;left:0px;top:238.40px;width:21.50px;height:13.75px;line-height:15.95px;text-align:center;font-size:9px;color:#444;-webkit-text-stroke:0.12px #444;overflow:hidden;">7</div>
<div style="position:absolute;left:0.00px;top:252.15px;width:21.50px;height:13.75px;background:#e4e3e1;border-bottom:0.8px solid #d3d1ce;"></div>
<div class="g" style="position:absolute;left:0px;top:252.15px;width:21.50px;height:13.75px;line-height:15.95px;text-align:center;font-size:9px;color:#444;-webkit-text-stroke:0.12px #444;overflow:hidden;">8</div>
<div style="position:absolute;left:0.00px;top:265.90px;width:21.50px;height:13.75px;background:#e4e3e1;border-bottom:0.8px solid #d3d1ce;"></div>
<div class="g" style="position:absolute;left:0px;top:265.90px;width:21.50px;height:13.75px;line-height:15.95px;text-align:center;font-size:9px;color:#444;-webkit-text-stroke:0.12px #444;overflow:hidden;">9</div>
<div style="position:absolute;left:0.00px;top:279.65px;width:21.50px;height:13.75px;background:#e4e3e1;border-bottom:0.8px solid #d3d1ce;"></div>
<div class="g" style="position:absolute;left:0px;top:279.65px;width:21.50px;height:13.75px;line-height:15.95px;text-align:center;font-size:9px;color:#444;-webkit-text-stroke:0.12px #444;overflow:hidden;">10</div>
<div style="position:absolute;left:0.00px;top:293.40px;width:21.50px;height:13.75px;background:#e4e3e1;border-bottom:0.8px solid #d3d1ce;"></div>
<div class="g" style="position:absolute;left:0px;top:293.40px;width:21.50px;height:13.75px;line-height:15.95px;text-align:center;font-size:9px;color:#444;-webkit-text-stroke:0.12px #444;overflow:hidden;">11</div>
<div style="position:absolute;left:0.00px;top:307.15px;width:21.50px;height:13.75px;background:#e4e3e1;border-bottom:0.8px solid #d3d1ce;"></div>
<div class="g" style="position:absolute;left:0px;top:307.15px;width:21.50px;height:13.75px;line-height:15.95px;text-align:center;font-size:9px;color:#444;-webkit-text-stroke:0.12px #444;overflow:hidden;">12</div>
<div style="position:absolute;left:0.00px;top:320.90px;width:21.50px;height:13.75px;background:#e4e3e1;border-bottom:0.8px solid #d3d1ce;"></div>
<div class="g" style="position:absolute;left:0px;top:320.90px;width:21.50px;height:13.75px;line-height:15.95px;text-align:center;font-size:9px;color:#444;-webkit-text-stroke:0.12px #444;overflow:hidden;">13</div>
<div style="position:absolute;left:0.00px;top:334.65px;width:21.50px;height:13.75px;background:#e4e3e1;border-bottom:0.8px solid #d3d1ce;"></div>
<div class="g" style="position:absolute;left:0px;top:334.65px;width:21.50px;height:13.75px;line-height:15.95px;text-align:center;font-size:9px;color:#444;-webkit-text-stroke:0.12px #444;overflow:hidden;">14</div>
<div style="position:absolute;left:0.00px;top:348.40px;width:21.50px;height:13.75px;background:#e4e3e1;border-bottom:0.8px solid #d3d1ce;"></div>
<div class="g" style="position:absolute;left:0px;top:348.40px;width:21.50px;height:13.75px;line-height:15.95px;text-align:center;font-size:9px;color:#444;-webkit-text-stroke:0.12px #444;overflow:hidden;">15</div>
<div style="position:absolute;left:0.00px;top:362.15px;width:21.50px;height:13.75px;background:#e4e3e1;border-bottom:0.8px solid #d3d1ce;"></div>
<div class="g" style="position:absolute;left:0px;top:362.15px;width:21.50px;height:13.75px;line-height:15.95px;text-align:center;font-size:9px;color:#444;-webkit-text-stroke:0.12px #444;overflow:hidden;">16</div>
<div style="position:absolute;left:0.00px;top:375.90px;width:21.50px;height:13.75px;background:#e4e3e1;border-bottom:0.8px solid #d3d1ce;"></div>
<div class="g" style="position:absolute;left:0px;top:375.90px;width:21.50px;height:13.75px;line-height:15.95px;text-align:center;font-size:9px;color:#444;-webkit-text-stroke:0.12px #444;overflow:hidden;">17</div>
<div style="position:absolute;left:0.00px;top:389.65px;width:21.50px;height:13.75px;background:#e4e3e1;border-bottom:0.8px solid #d3d1ce;"></div>
<div class="g" style="position:absolute;left:0px;top:389.65px;width:21.50px;height:13.75px;line-height:15.95px;text-align:center;font-size:9px;color:#444;-webkit-text-stroke:0.12px #444;overflow:hidden;">18</div>
<div style="position:absolute;left:0.00px;top:403.40px;width:21.50px;height:13.75px;background:#e4e3e1;border-bottom:0.8px solid #d3d1ce;"></div>
<div class="g" style="position:absolute;left:0px;top:403.40px;width:21.50px;height:13.75px;line-height:15.95px;text-align:center;font-size:9px;color:#444;-webkit-text-stroke:0.12px #444;overflow:hidden;">19</div>
<div style="position:absolute;left:0.00px;top:417.15px;width:21.50px;height:13.75px;background:#e4e3e1;border-bottom:0.8px solid #d3d1ce;"></div>
<div class="g" style="position:absolute;left:0px;top:417.15px;width:21.50px;height:13.75px;line-height:15.95px;text-align:center;font-size:9px;color:#444;-webkit-text-stroke:0.12px #444;overflow:hidden;">20</div>
<div style="position:absolute;left:0.00px;top:430.90px;width:21.50px;height:13.75px;background:#e4e3e1;border-bottom:0.8px solid #d3d1ce;"></div>
<div class="g" style="position:absolute;left:0px;top:430.90px;width:21.50px;height:13.75px;line-height:15.95px;text-align:center;font-size:9px;color:#444;-webkit-text-stroke:0.12px #444;overflow:hidden;">21</div>
<div style="position:absolute;left:0.00px;top:444.65px;width:21.50px;height:13.75px;background:#e4e3e1;border-bottom:0.8px solid #d3d1ce;"></div>
<div class="g" style="position:absolute;left:0px;top:444.65px;width:21.50px;height:13.75px;line-height:15.95px;text-align:center;font-size:9px;color:#444;-webkit-text-stroke:0.12px #444;overflow:hidden;">22</div>
<div style="position:absolute;left:0.00px;top:458.40px;width:21.50px;height:13.75px;background:#e4e3e1;border-bottom:0.8px solid #d3d1ce;"></div>
<div class="g" style="position:absolute;left:0px;top:458.40px;width:21.50px;height:13.75px;line-height:15.95px;text-align:center;font-size:9px;color:#444;-webkit-text-stroke:0.12px #444;overflow:hidden;">23</div>
<div style="position:absolute;left:0.00px;top:472.15px;width:21.50px;height:13.75px;background:#e4e3e1;border-bottom:0.8px solid #d3d1ce;"></div>
<div class="g" style="position:absolute;left:0px;top:472.15px;width:21.50px;height:13.75px;line-height:15.95px;text-align:center;font-size:9px;color:#444;-webkit-text-stroke:0.12px #444;overflow:hidden;">24</div>
<div style="position:absolute;left:0.00px;top:485.90px;width:21.50px;height:13.75px;background:#e4e3e1;border-bottom:0.8px solid #d3d1ce;"></div>
<div class="g" style="position:absolute;left:0px;top:485.90px;width:21.50px;height:13.75px;line-height:15.95px;text-align:center;font-size:9px;color:#444;-webkit-text-stroke:0.12px #444;overflow:hidden;">25</div>
<div style="position:absolute;left:0.00px;top:499.65px;width:21.50px;height:13.75px;background:#e4e3e1;border-bottom:0.8px solid #d3d1ce;"></div>
<div class="g" style="position:absolute;left:0px;top:499.65px;width:21.50px;height:13.75px;line-height:15.95px;text-align:center;font-size:9px;color:#444;-webkit-text-stroke:0.12px #444;overflow:hidden;">26</div>
<div style="position:absolute;left:0.00px;top:513.40px;width:21.50px;height:13.75px;background:#e4e3e1;border-bottom:0.8px solid #d3d1ce;"></div>
<div class="g" style="position:absolute;left:0px;top:513.40px;width:21.50px;height:13.75px;line-height:15.95px;text-align:center;font-size:9px;color:#444;-webkit-text-stroke:0.12px #444;overflow:hidden;">27</div>
<div style="position:absolute;left:0.00px;top:527.15px;width:21.50px;height:13.75px;background:#e4e3e1;border-bottom:0.8px solid #d3d1ce;"></div>
<div class="g" style="position:absolute;left:0px;top:527.15px;width:21.50px;height:13.75px;line-height:15.95px;text-align:center;font-size:9px;color:#444;-webkit-text-stroke:0.12px #444;overflow:hidden;">28</div>
<div style="position:absolute;left:0.00px;top:540.90px;width:21.50px;height:13.75px;background:#e4e3e1;border-bottom:0.8px solid #d3d1ce;"></div>
<div class="g" style="position:absolute;left:0px;top:540.90px;width:21.50px;height:13.75px;line-height:15.95px;text-align:center;font-size:9px;color:#444;-webkit-text-stroke:0.12px #444;overflow:hidden;">29</div>
<div style="position:absolute;left:0.00px;top:554.65px;width:21.50px;height:13.75px;background:#e4e3e1;border-bottom:0.8px solid #d3d1ce;"></div>
<div class="g" style="position:absolute;left:0px;top:554.65px;width:21.50px;height:13.75px;line-height:15.95px;text-align:center;font-size:9px;color:#444;-webkit-text-stroke:0.12px #444;overflow:hidden;">30</div>
<div style="position:absolute;left:0.00px;top:568.40px;width:21.50px;height:13.75px;background:#e4e3e1;border-bottom:0.8px solid #d3d1ce;"></div>
<div class="g" style="position:absolute;left:0px;top:568.40px;width:21.50px;height:13.75px;line-height:15.95px;text-align:center;font-size:9px;color:#444;-webkit-text-stroke:0.12px #444;overflow:hidden;">31</div>
<div style="position:absolute;left:0.00px;top:582.15px;width:21.50px;height:13.75px;background:#e4e3e1;border-bottom:0.8px solid #d3d1ce;"></div>
<div class="g" style="position:absolute;left:0px;top:582.15px;width:21.50px;height:13.75px;line-height:15.95px;text-align:center;font-size:9px;color:#444;-webkit-text-stroke:0.12px #444;overflow:hidden;">32</div>
<div style="position:absolute;left:0.00px;top:595.90px;width:21.50px;height:13.75px;background:#e4e3e1;border-bottom:0.8px solid #d3d1ce;"></div>
<div class="g" style="position:absolute;left:0px;top:595.90px;width:21.50px;height:13.75px;line-height:15.95px;text-align:center;font-size:9px;color:#444;-webkit-text-stroke:0.12px #444;overflow:hidden;">33</div>
<div style="position:absolute;left:0.00px;top:609.65px;width:21.50px;height:13.75px;background:#e4e3e1;border-bottom:0.8px solid #d3d1ce;"></div>
<div class="g" style="position:absolute;left:0px;top:609.65px;width:21.50px;height:13.75px;line-height:15.95px;text-align:center;font-size:9px;color:#444;-webkit-text-stroke:0.12px #444;overflow:hidden;">34</div>
<div style="position:absolute;left:0.00px;top:623.40px;width:21.50px;height:8.60px;background:#e4e3e1;border-bottom:0.8px solid #d3d1ce;"></div>
<div class="g" style="position:absolute;left:0px;top:623.40px;width:21.50px;height:13.75px;line-height:15.95px;text-align:center;font-size:9px;color:#444;-webkit-text-stroke:0.12px #444;overflow:hidden;">35</div>
<div style="position:absolute;left:20.70px;top:113.60px;width:0.80px;height:518.40px;background:#cfcdca;"></div>
<div style="position:absolute;left:0.00px;top:209.80px;width:1152.00px;height:1.10px;background:#222;"></div>
<div style="position:absolute;left:1152.00px;top:100.00px;width:9.00px;height:532.50px;background:#cecece;"></div>
<div style="position:absolute;left:1153.30px;top:102.00px;width:5.50px;height:194.00px;background:#8a8a8a;border-radius:3px;"></div>
<div style="position:absolute;left:0.00px;top:632.20px;width:1152.00px;height:9.10px;background:#cecece;"></div>
<div style="position:absolute;left:1.50px;top:634.10px;width:542.30px;height:5.60px;background:#888888;border-radius:3px;"></div>
<div style="position:absolute;left:1148.80px;top:634.50px;width:0.80px;height:4.50px;background:#555;"></div>
<div style="position:absolute;left:0.00px;top:641.30px;width:1161.00px;height:17.00px;background:#f6f5f4;"></div>
<svg style="position:absolute;left:6px;top:643.3px" width="61" height="13.5" viewBox="0 0 61 13.5"><g fill="none" stroke="#d2d2d2" stroke-width="1"><path d="M1 0.8h2v12h-2z M10 0.8L4 6.8l6 6 1.6-1.5-4.5-4.5 4.5-4.5z"/><path d="M19 3.5l-3.5 3.3 3.5 3.3v-6.6z M24.5 3.5L21 6.8l3.5 3.3z M28 3.5l-3.5 3.3 3.5 3.3z"/><path d="M33 3.5l3.5 3.3-3.5 3.3z M36.5 3.5L40 6.8l-3.5 3.3z M42 3.5l3.5 3.3-3.5 3.3z"/><path d="M58 0.8h2v12h-2z M49 0.8l6 6-6 6-1.6-1.5 4.5-4.5-4.5-4.5z"/></g></svg>
<div style="position:absolute;left:85.00px;top:641.60px;width:88.00px;height:16.20px;background:#fdfdfd;"></div>
<div style="position:absolute;left:75.00px;top:643.00px;width:9.50px;height:14.00px;background:#fff;border:0.6px solid #e2e2e2;"></div>
<svg style="position:absolute;left:81.8px;top:646.6px" width="5.4" height="5.4" viewBox="0 0 6 6"><circle cx="3" cy="3" r="2.8" fill="#3d6fb5"/><path d="M3 1.4v3.2M1.4 3h3.2" stroke="#fff" stroke-width="0.9"/></svg>
<div class="g" style="position:absolute;left:100.00px;top:644.26px;font-size:9.74px;line-height:1;font-weight:bold;font-style:normal;color:#2e2e2e;white-space:nowrap;transform:scaleX(0.8134);transform-origin:0 0;-webkit-text-stroke:0.15px #2e2e2e;">Registro Accessi</div>
<div style="position:absolute;left:92.00px;top:655.70px;width:81.00px;height:2.20px;background:#858585;"></div>
<div class="g" style="position:absolute;left:182.30px;top:644.26px;font-size:9.74px;line-height:1;font-weight:normal;font-style:normal;color:#444;white-space:nowrap;transform:scaleX(0.8831);transform-origin:0 0;">Istruzioni</div>
<div style="position:absolute;left:227.00px;top:645.30px;width:0.80px;height:8.10px;background:#d4d4d4;"></div>
<div class="g" style="position:absolute;left:237.30px;top:644.26px;font-size:9.74px;line-height:1;font-weight:normal;font-style:normal;color:#444;white-space:nowrap;transform:scaleX(0.8455);transform-origin:0 0;">Statistiche</div>
<div style="position:absolute;left:285.00px;top:645.30px;width:0.80px;height:8.10px;background:#d4d4d4;"></div>
<div style="position:absolute;left:0.00px;top:658.30px;width:1200.00px;height:0.80px;background:#dcdad7;"></div>
<svg style="position:absolute;left:6px;top:661px" width="11" height="11" viewBox="0 0 24 24"><path d="M3 3h15l3 3v15H3z" fill="#f6f5f4" stroke="#888" stroke-width="1.8"/><rect x="7" y="3" width="9" height="6" fill="none" stroke="#888" stroke-width="1.5"/><rect x="6" y="14" width="12" height="7" fill="none" stroke="#888" stroke-width="1.5"/></svg>
<div class="g" style="position:absolute;left:27.30px;top:663.05px;font-size:9.16px;line-height:1;font-weight:normal;font-style:normal;color:#444;white-space:nowrap;transform:scaleX(0.8846);transform-origin:0 0;">Sheet 1 of 3</div>
<div style="position:absolute;left:176.00px;top:660.00px;width:0.80px;height:14.00px;background:#e0dedb;"></div>
<div class="g" style="position:absolute;left:182.70px;top:663.05px;font-size:9.16px;line-height:1;font-weight:normal;font-style:normal;color:#444;white-space:nowrap;transform:scaleX(0.8983);transform-origin:0 0;">Selected: 1 row, 9 columns</div>
<div class="g" style="position:absolute;left:397.40px;top:663.05px;font-size:9.16px;line-height:1;font-weight:normal;font-style:normal;color:#444;white-space:nowrap;transform:scaleX(0.8785);transform-origin:0 0;">PageStyle_Registro Accessi</div>
<div style="position:absolute;left:608.00px;top:660.00px;width:0.80px;height:14.00px;background:#e0dedb;"></div>
<div style="position:absolute;left:390.50px;top:660.00px;width:0.80px;height:14.00px;background:#e0dedb;"></div>
<div style="position:absolute;left:819.60px;top:660.00px;width:0.80px;height:14.00px;background:#e0dedb;"></div>
<div style="position:absolute;left:850.00px;top:660.00px;width:0.80px;height:14.00px;background:#e0dedb;"></div>
<div class="g" style="position:absolute;left:666.80px;top:663.05px;font-size:9.16px;line-height:1;font-weight:normal;font-style:normal;color:#444;white-space:nowrap;transform:scaleX(0.8730);transform-origin:0 0;">English (USA)</div>
<div style="position:absolute;left:775.00px;top:660.00px;width:0.80px;height:14.00px;background:#e0dedb;"></div>
<div style="position:absolute;left:827.30px;top:664.00px;width:11.20px;height:6.50px;border:0.9px solid #5f97d6;background:#e3edf8;"></div>
<svg style="position:absolute;left:841.3px;top:661.2px" width="4" height="11.5" viewBox="0 0 4 11.5"><path d="M0.3 0.5h3.4M0.3 11h3.4M2 0.5v10.5" stroke="#3c3c3c" stroke-width="0.9" fill="none"/></svg>
<div style="position:absolute;left:870.00px;top:660.00px;width:0.80px;height:14.00px;background:#e0dedb;"></div>
<div style="position:absolute;left:890.00px;top:660.00px;width:0.80px;height:14.00px;background:#e0dedb;"></div>
<div class="g" style="position:absolute;left:950.00px;top:663.05px;font-size:9.16px;line-height:1;font-weight:normal;font-style:normal;color:#444;white-space:nowrap;transform:scaleX(0.8794);transform-origin:0 0;">Average: ; Sum: 0</div>
<div style="position:absolute;left:1072.00px;top:660.00px;width:0.80px;height:14.00px;background:#e0dedb;"></div>
<div style="position:absolute;left:1077.50px;top:666.50px;width:7.00px;height:1.20px;background:#333;"></div>
<div style="position:absolute;left:1088.00px;top:666.80px;width:64.00px;height:0.80px;background:#888;"></div>
<div style="position:absolute;left:1118.00px;top:663.00px;width:3.00px;height:7.50px;border:0.8px solid #555;background:#fff;"></div>
<div style="position:absolute;left:1155.50px;top:666.50px;width:7.00px;height:1.20px;background:#333;"></div>
<div style="position:absolute;left:1158.40px;top:663.60px;width:1.20px;height:7.00px;background:#333;"></div>
<div style="position:absolute;left:1168.00px;top:660.00px;width:0.80px;height:14.00px;background:#e0dedb;"></div>
<div class="g" style="position:absolute;left:1172.70px;top:663.05px;font-size:9.16px;line-height:1;font-weight:normal;font-style:normal;color:#444;white-space:nowrap;transform:scaleX(0.8788);transform-origin:0 0;">100%</div>
</div></body></html>
